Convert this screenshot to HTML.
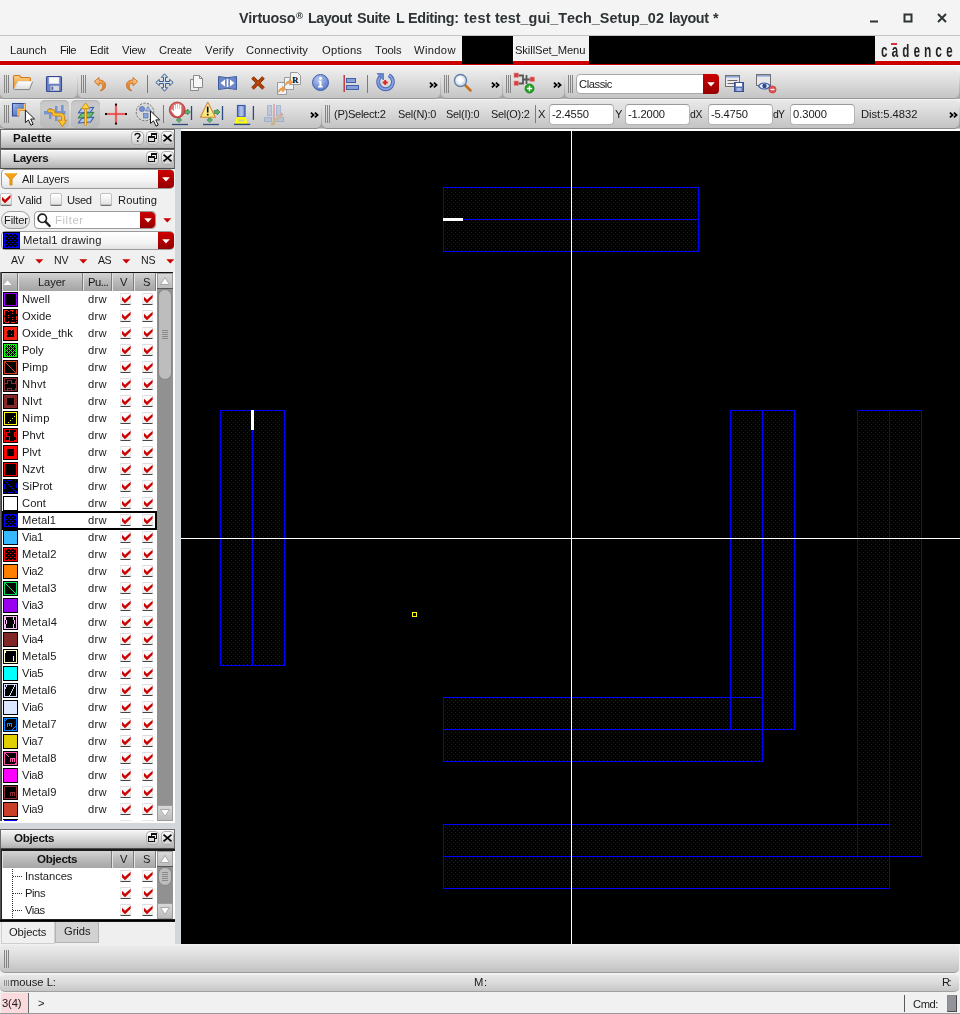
<!DOCTYPE html><html><head><meta charset="utf-8"><title>Virtuoso</title><style>
*{box-sizing:border-box;margin:0;padding:0}
html,body{width:960px;height:1014px;overflow:hidden;background:#efefef;font-family:"Liberation Sans", sans-serif;}
.a{position:absolute}
.t{position:absolute;white-space:pre;line-height:1;font-family:"Liberation Sans", sans-serif;will-change:transform;font-kerning:none}
#title{left:0;top:0;width:960px;height:36px;background:#f4f4f4;border-bottom:1px solid #c4c4c2}
#menubar{left:0;top:36px;width:960px;height:29px;background:#f2f2f2}
.hdr{position:absolute;left:0;width:175px;height:20px;border:1px solid #6a6a6a;border-bottom-color:#4c4c4c;background:linear-gradient(#ffffff 0,#f2f2f2 8%,#dedede 40%,#c2c2c2 80%,#b0b0b0 100%);}
.hbtn{position:absolute;width:13px;height:14px;border-radius:4px;border:1px solid #b0b0b0;background:linear-gradient(#fdfdfd,#e6e6e6 50%,#cfcfcf);}
.combo{position:absolute;border:1px solid #9a9a9a;border-radius:4px;background:linear-gradient(#ffffff,#f4f4f4 60%,#e2e2e2);}
.redbtn{position:absolute;border-radius:0 4px 4px 0;background:linear-gradient(#cc0000,#b40000 45%,#960000);}
.cb{position:absolute;width:13px;height:13px;border:1px solid #c2c2c2;border-radius:2px;background:linear-gradient(#ffffff,#e4e4e4);box-shadow:0 1px 0 #707070}
.th{position:absolute;top:0;height:18px;background:linear-gradient(#d4d4d4,#b8b8b8 50%,#a4a4a4);border-right:1px solid #7d7d7d;border-left:1px solid #e4e4e4}
.sw{position:absolute;left:3px;width:15px;height:15px;}
.row{position:absolute;left:0;width:155px;height:17px}
.cb2{position:absolute;width:12px;height:12px;transform:translateX(-.5px);border:1px solid #dcdcdc;border-bottom:1px solid #444;border-radius:2px;background:linear-gradient(#ffffff,#ececec)}
.sbb{background:linear-gradient(#d8d8d8,#bcbcbc);border:1px solid #9a9a9a}
</style></head><body>
<div id="title" class="a"></div>
<div class="t" style="left:239px;top:10px;font-size:14.4px;line-height:16px;color:#2e3436;font-weight:bold;letter-spacing:-0.272px;">Virtuoso</div>
<div class="t" style="left:308.3px;top:10px;font-size:14.4px;line-height:16px;color:#2e3436;font-weight:bold;letter-spacing:-0.58px;">Layout</div>
<div class="t" style="left:357px;top:10px;font-size:14.4px;line-height:16px;color:#2e3436;font-weight:bold;letter-spacing:-0.426px;">Suite</div>
<div class="t" style="left:396.4px;top:10px;font-size:14.4px;line-height:16px;color:#2e3436;font-weight:bold;">L</div>
<div class="t" style="left:408px;top:10px;font-size:14.4px;line-height:16px;color:#2e3436;font-weight:bold;letter-spacing:-0.369px;">Editing:</div>
<div class="t" style="left:463.5px;top:10px;font-size:14.4px;line-height:16px;color:#2e3436;font-weight:bold;letter-spacing:0.297px;">test</div>
<div class="t" style="left:495px;top:10px;font-size:14.4px;line-height:16px;color:#2e3436;font-weight:bold;letter-spacing:0.006px;">test_gui_Tech_Setup_02</div>
<div class="t" style="left:669px;top:10px;font-size:14.4px;line-height:16px;color:#2e3436;font-weight:bold;letter-spacing:-0.481px;">layout</div>
<div class="t" style="left:712.5px;top:10px;font-size:14.4px;line-height:16px;color:#2e3436;font-weight:bold;">*</div>
<div class="t" style="left:296.3px;top:10px;font-size:9.5px;line-height:11px;color:#2e3436;font-weight:bold;">®</div>
<svg class="a" style="left:860px;top:8px" width="96" height="22" viewBox="0 0 96 22"><g stroke="#2e3436" stroke-width="2" fill="none"><path d="M10 13.5h8"/><rect x="44.5" y="6.5" width="7" height="7"/><path d="M78 6l8 8M86 6l-8 8"/></g></svg>
<div id="menubar" class="a"></div>
<div class="a" style="left:0;top:60px;width:960px;height:1px;background:#f2fcfc"></div>
<div class="a" style="left:0;top:61px;width:960px;height:4px;background:#cc0000"></div>
<div class="a" style="left:462px;top:36px;width:51px;height:28px;background:#000"></div>
<div class="a" style="left:589px;top:36px;width:286px;height:28px;background:#000"></div>
<div class="a" style="left:513px;top:37px;width:1px;height:24px;background:#fff"></div>
<div class="t" style="left:10px;top:44px;font-size:11.2px;line-height:12px;color:#1a1a1a;letter-spacing:-0.049px;">Launch</div>
<div class="t" style="left:59.5px;top:44px;font-size:11.2px;line-height:12px;color:#1a1a1a;letter-spacing:-0.516px;">File</div>
<div class="t" style="left:89.5px;top:44px;font-size:11.2px;line-height:12px;color:#1a1a1a;letter-spacing:-0.1px;">Edit</div>
<div class="t" style="left:121.5px;top:44px;font-size:11.2px;line-height:12px;color:#1a1a1a;letter-spacing:-0.259px;">View</div>
<div class="t" style="left:158.5px;top:44px;font-size:11.2px;line-height:12px;color:#1a1a1a;letter-spacing:-0.123px;">Create</div>
<div class="t" style="left:204.5px;top:44px;font-size:11.2px;line-height:12px;color:#1a1a1a;letter-spacing:0.074px;">Verify</div>
<div class="t" style="left:246.3px;top:44px;font-size:11.2px;line-height:12px;color:#1a1a1a;letter-spacing:0.091px;">Connectivity</div>
<div class="t" style="left:321.5px;top:44px;font-size:11.2px;line-height:12px;color:#1a1a1a;letter-spacing:0.234px;">Options</div>
<div class="t" style="left:374.5px;top:44px;font-size:11.2px;line-height:12px;color:#1a1a1a;letter-spacing:-0.222px;">Tools</div>
<div class="t" style="left:414px;top:44px;font-size:11.2px;line-height:12px;color:#1a1a1a;letter-spacing:0.333px;">Window</div>
<div class="t" style="left:515px;top:44px;font-size:11.2px;line-height:12px;color:#1a1a1a;letter-spacing:-0.091px;">SkillSet_Menu</div>
<div class="a" style="left:880.5px;top:38.7px;height:24px;line-height:24px;white-space:pre;font-weight:bold;font-size:18.8px;letter-spacing:6.7px;color:#222;transform-origin:0 0;transform:scaleX(.62);will-change:transform;font-kerning:none">cadence</div>
<div class="a" style="left:891.3px;top:43px;width:5.7px;height:1.6px;background:#e03040;will-change:transform"></div>
<div class="a" style="left:0;top:65px;width:960px;height:5px;background:linear-gradient(#f2ffff 0,#f2ffff 1px,#f0f0f0 1px)"></div>
<div class="a" style="left:0;top:70px;width:960px;height:30px;background:linear-gradient(#f0f0f0 0,#e4e4e4 15%,#c4c4c4 50%,#a4a4a4 90%,#b0b0b0 96%,#f4f4f4 100%)"></div>
<div class="a" style="left:0px;top:70px;width:77px;height:29px;background:linear-gradient(#ebebeb,#e3e3e3 25%,#d3d3d3 65%,#c5c5c5);border-bottom:1px solid #989898;border-radius:4px 4px 5px 5px"></div>
<div class="a" style="left:78px;top:70px;width:362px;height:29px;background:linear-gradient(#ebebeb,#e3e3e3 25%,#d3d3d3 65%,#c5c5c5);border-bottom:1px solid #989898;border-radius:4px 4px 5px 5px"></div>
<div class="a" style="left:441px;top:70px;width:61px;height:29px;background:linear-gradient(#ebebeb,#e3e3e3 25%,#d3d3d3 65%,#c5c5c5);border-bottom:1px solid #989898;border-radius:4px 4px 5px 5px"></div>
<div class="a" style="left:503px;top:70px;width:61px;height:29px;background:linear-gradient(#ebebeb,#e3e3e3 25%,#d3d3d3 65%,#c5c5c5);border-bottom:1px solid #989898;border-radius:4px 4px 5px 5px"></div>
<div class="a" style="left:565px;top:70px;width:394px;height:29px;background:linear-gradient(#ebebeb,#e3e3e3 25%,#d3d3d3 65%,#c5c5c5);border-bottom:1px solid #989898;border-radius:4px 4px 5px 5px"></div>
<div class="a" style="left:0;top:99px;width:960px;height:1px;background:#f4f4f4"></div>
<div class="a" style="left:0;top:100px;width:960px;height:29px;background:linear-gradient(#f0f0f0 0,#e2e2e2 15%,#c0c0c0 50%,#a0a0a0 90%,#a8a8a8 96%,#dcdcdc 100%)"></div>
<div class="a" style="left:0px;top:100px;width:321px;height:29px;background:linear-gradient(#e8e8e8,#dfdfdf 30%,#cfcfcf 70%,#c3c3c3);border-bottom:1px solid #8c8c8c;border-radius:4px 4px 5px 5px"></div>
<div class="a" style="left:322px;top:100px;width:637px;height:29px;background:linear-gradient(#e8e8e8,#dfdfdf 30%,#cfcfcf 70%,#c3c3c3);border-bottom:1px solid #8c8c8c;border-radius:4px 4px 5px 5px"></div>
<div class="a" style="left:4px;top:75px;width:1px;height:18px;background:#858585"></div>
<div class="a" style="left:6px;top:75px;width:1px;height:18px;background:#858585"></div>
<div class="a" style="left:8px;top:75px;width:1px;height:18px;background:#858585"></div>
<div class="a" style="left:81px;top:75px;width:1px;height:18px;background:#858585"></div>
<div class="a" style="left:83px;top:75px;width:1px;height:18px;background:#858585"></div>
<div class="a" style="left:85px;top:75px;width:1px;height:18px;background:#858585"></div>
<div class="a" style="left:444px;top:75px;width:1px;height:18px;background:#858585"></div>
<div class="a" style="left:446px;top:75px;width:1px;height:18px;background:#858585"></div>
<div class="a" style="left:448px;top:75px;width:1px;height:18px;background:#858585"></div>
<div class="a" style="left:506px;top:75px;width:1px;height:18px;background:#858585"></div>
<div class="a" style="left:508px;top:75px;width:1px;height:18px;background:#858585"></div>
<div class="a" style="left:510px;top:75px;width:1px;height:18px;background:#858585"></div>
<div class="a" style="left:568px;top:75px;width:1px;height:18px;background:#858585"></div>
<div class="a" style="left:570px;top:75px;width:1px;height:18px;background:#858585"></div>
<div class="a" style="left:572px;top:75px;width:1px;height:18px;background:#858585"></div>
<div class="a" style="left:4px;top:105px;width:1px;height:18px;background:#858585"></div>
<div class="a" style="left:6px;top:105px;width:1px;height:18px;background:#858585"></div>
<div class="a" style="left:8px;top:105px;width:1px;height:18px;background:#858585"></div>
<div class="a" style="left:325px;top:105px;width:1px;height:18px;background:#858585"></div>
<div class="a" style="left:327px;top:105px;width:1px;height:18px;background:#858585"></div>
<div class="a" style="left:329px;top:105px;width:1px;height:18px;background:#858585"></div>
<div class="a" style="left:147px;top:75px;width:1px;height:18px;background:#7a7a7a"></div>
<div class="a" style="left:367px;top:75px;width:1px;height:18px;background:#7a7a7a"></div>
<div class="a" style="left:163px;top:105px;width:1px;height:18px;background:#7a7a7a"></div>
<div class="a" style="left:535px;top:105px;width:1px;height:18px;background:#7a7a7a"></div>
<svg class="a" style="left:429px;top:82.0px" width="9" height="6"><path d="M0.9 0.6L3.600 3L.9 5.400M4.900 .6L7.600 3L4.900 5.400" stroke="#000" stroke-width="1.700" fill="none"/></svg>
<svg class="a" style="left:491px;top:82.0px" width="9" height="6"><path d="M0.9 0.6L3.600 3L.9 5.400M4.900 .6L7.600 3L4.900 5.400" stroke="#000" stroke-width="1.700" fill="none"/></svg>
<svg class="a" style="left:553px;top:82.0px" width="9" height="6"><path d="M0.9 0.6L3.600 3L.9 5.400M4.900 .6L7.600 3L4.900 5.400" stroke="#000" stroke-width="1.700" fill="none"/></svg>
<svg class="a" style="left:310px;top:112.0px" width="9" height="6"><path d="M0.9 0.6L3.600 3L.9 5.400M4.900 .6L7.600 3L4.900 5.400" stroke="#000" stroke-width="1.700" fill="none"/></svg>
<svg class="a" style="left:949px;top:112.0px" width="9" height="6"><path d="M0.9 0.6L3.600 3L.9 5.400M4.900 .6L7.600 3L4.900 5.400" stroke="#000" stroke-width="1.700" fill="none"/></svg>
<svg class="a" style="left:12px;top:74px" width="22" height="18" viewBox="0 0 22 18" ><defs><linearGradient id="gfo" x1="0" y1="0" x2="0" y2="1"><stop offset="0" stop-color="#fbd494"/><stop offset=".5" stop-color="#f4ac4c"/><stop offset="1" stop-color="#ec9830"/></linearGradient><linearGradient id="gfl" x1="0" y1="0" x2="0" y2="1"><stop offset="0" stop-color="#ffffff"/><stop offset="1" stop-color="#dcdcdc"/></linearGradient></defs><path d="M1.500 15.500V2.800c0-.8.500-1.300 1.300-1.300h4.200c.6 0 1 .3 1.300.8l.6 1.200h8.200c.8 0 1.300.5 1.300 1.300v3" fill="url(#gfo)" stroke="#d07818" stroke-width="1.100"/><path d="M2.200 15.600L5.800 7.500H20.700L17.400 15.600z" fill="url(#gfl)" stroke="#7a7a7a" stroke-width=".9" stroke-linejoin="round"/><path d="M2.200 15.600L5.800 7.500H20.700" fill="none" stroke="#f4f4f4" stroke-width=".9"/></svg>
<svg class="a" style="left:45px;top:75px" width="18" height="18" viewBox="0 0 18 18" ><rect x="1.500" y="1.500" width="15" height="15" rx="1" fill="#6c82c4" stroke="#364a8c" stroke-width="1.100"/><rect x="3" y="2.200" width="12" height="6.500" fill="#fafafa"/><path d="M3.600 2.200v6.500M14.400 2.200v6.500" stroke="#6c82c4" stroke-width=".9"/><rect x="5.500" y="10.800" width="8.500" height="4.800" fill="#d8d8de"/><rect x="6.500" y="11.600" width="1.700" height="3.300" fill="#4c64b0"/></svg>
<svg class="a" style="left:93px;top:76px" width="15" height="16" viewBox="0 0 15 16" ><defs><linearGradient id="gun" x1="0" y1="0" x2="1" y2="1"><stop offset="0" stop-color="#fcdcb0"/><stop offset=".45" stop-color="#f0a050"/><stop offset="1" stop-color="#d87820"/></linearGradient></defs><path d="M1.200 5.600L6 1.400V4C11 4 13.200 7.200 12.400 10.600C11.800 13 9.800 14.500 7 14.900C9.200 13.400 10 11.700 9.700 9.800C9.400 8 8 7.300 6 7.300V9.900z" fill="url(#gun)" stroke="#c87024" stroke-width=".9" stroke-linejoin="round"/></svg>
<svg class="a" style="left:124px;top:76px" width="15" height="16" viewBox="0 0 15 16" ><g transform="translate(15,0) scale(-1,1)"><defs><linearGradient id="gre" x1="0" y1="0" x2="1" y2="1"><stop offset="0" stop-color="#fcdcb0"/><stop offset=".45" stop-color="#f0a050"/><stop offset="1" stop-color="#d87820"/></linearGradient></defs><path d="M1.200 5.600L6 1.400V4C11 4 13.200 7.200 12.400 10.600C11.800 13 9.800 14.500 7 14.900C9.200 13.400 10 11.700 9.700 9.800C9.400 8 8 7.300 6 7.300V9.900z" fill="url(#gre)" stroke="#c87024" stroke-width=".9" stroke-linejoin="round"/></g></svg>
<svg class="a" style="left:155px;top:73px" width="19" height="19" viewBox="0 0 19 19" ><path d="M9.5 .8L12.600 4.300H10.500V8.500H14.700V6.400L18.200 9.500L14.700 12.600V10.500H10.500V14.700H12.600L9.500 18.200L6.400 14.700H8.500V10.500H4.300V12.600L.8 9.500L4.300 6.400V8.500H8.500V4.300H6.400z" fill="#d4e0ee" stroke="#3a5e86" stroke-width="1" stroke-linejoin="round"/></svg>
<svg class="a" style="left:189px;top:74px" width="15" height="18" viewBox="0 0 15 18" ><path d="M1.5 5.5h8v11h-8z" fill="#eee" stroke="#8a8a8a"/><path d="M4.5 1.5h6l3 3v9h-9z" fill="#f6f6f6" stroke="#8a8a8a"/><path d="M10.5 1.5v3h3" fill="none" stroke="#8a8a8a"/></svg>
<svg class="a" style="left:217px;top:75px" width="21" height="16" viewBox="0 0 21 16" ><path d="M1.5 1.5Q10.5 4 19.5 1.5V14.5Q10.5 12 1.5 14.5z" fill="#6a88c8" stroke="#3c5a9c"/><path d="M3.5 8L8 4.5V11.5zM17.5 8L13 4.500V11.5z" fill="#fff"/><rect x="9.700" y="4" width="1.600" height="8" fill="#fff"/></svg>
<svg class="a" style="left:250px;top:75px" width="16" height="16" viewBox="0 0 16 16" ><path d="M2.500 2.500L13.500 13.500M13.500 2.500L2.500 13.500" stroke="#8a2c00" stroke-width="3.600"/><path d="M2.500 2.500L13.500 13.500M13.500 2.500L2.500 13.500" stroke="#c85010" stroke-width="2" stroke-dasharray="1.2 .8"/></svg>
<svg class="a" style="left:276px;top:71px" width="27" height="26" viewBox="0 0 27 26" ><g fill="#f2f2f2" stroke="#9a9a9a"><path d="M1.500 11.500h7l2 2v10h-9z"/><path d="M8.500 6.500h7l2 2v10h-9z"/><path d="M14.500 1.500h7l3 3v9h-10z"/></g><path d="M2.500 21.500c0-3 1.500-4.500 4-4.500v-2l3 3-3 3v-2c-1.500 0-2.500.8-4 2.500z" fill="#f0a050" stroke="#d08030" stroke-width=".5"/><path d="M9.500 14.500c0-3 1.500-4.500 4-4.500v-2l3 3-3 3v-2c-1.500 0-2.500.8-4 2.500z" fill="#f0a050" stroke="#d08030" stroke-width=".5"/><text x="16.200" y="11.500" font-family="Liberation Serif" font-weight="bold" font-size="8.500" fill="#000">R</text></svg>
<svg class="a" style="left:311px;top:73px" width="19" height="19" viewBox="0 0 19 19" ><defs><radialGradient id="gi" cx=".4" cy=".3" r=".8"><stop offset="0" stop-color="#b8c8f0"/><stop offset="1" stop-color="#5070c0"/></radialGradient></defs><circle cx="9.500" cy="9.500" r="8" fill="url(#gi)" stroke="#4060b0"/><circle cx="9.500" cy="5.200" r="1.500" fill="#fff"/><path d="M7.500 7.800h3v5.200h1.200v1.500h-4.600v-1.500h1.300v-3.700h-.9z" fill="#fff"/></svg>
<svg class="a" style="left:342px;top:74px" width="18" height="19" viewBox="0 0 18 19" ><rect x="1.500" y="1" width="1.400" height="17" fill="#c03030"/><rect x="4.500" y="4.500" width="9" height="4" fill="#88a0d8" stroke="#4060a8"/><rect x="4.500" y="11.500" width="12" height="4" fill="#88a0d8" stroke="#4060a8"/></svg>
<svg class="a" style="left:375px;top:72px" width="21" height="21" viewBox="0 0 21 21" ><path d="M13.800 3.200A7.400 7.400 0 1 1 5.600 4.400" fill="none" stroke="#4464b4" stroke-width="3.800"/><path d="M13.800 3.200A7.400 7.400 0 1 1 5.600 4.400" fill="none" stroke="#86a0e0" stroke-width="2"/><path d="M2 1.500h6.500v6.500z" fill="#6a88d0" stroke="#4060a8" stroke-width=".6"/><path d="M10.200 8v5M7.700 10.500h5" stroke="#e02020" stroke-width="1.800"/></svg>
<svg class="a" style="left:453px;top:73px" width="20" height="20" viewBox="0 0 20 20" ><defs><radialGradient id="gm" cx=".4" cy=".35" r=".7"><stop offset="0" stop-color="#fff"/><stop offset="1" stop-color="#c4d4e8"/></radialGradient></defs><path d="M11.500 11.500L17.500 17.500" stroke="#c87020" stroke-width="2.600" stroke-linecap="round"/><circle cx="7.500" cy="7.500" r="6" fill="url(#gm)" stroke="#6080a8" stroke-width="1.400"/><path d="M7.500 4v7M4 7.500h7" stroke="#fff" stroke-width="2"/></svg>
<svg class="a" style="left:513px;top:72px" width="24" height="23" viewBox="0 0 24 23" ><path d="M5 3.500h5v8h-5M10 7.500h7M13.500 3v9" fill="none" stroke="#585858" stroke-width="1.800"/><rect x="1" y="1" width="4.500" height="4.500" fill="#d84040" stroke="#e89090" stroke-width=".6"/><rect x="1" y="9" width="4.500" height="4.500" fill="#d84040" stroke="#e89090" stroke-width=".6"/><rect x="17" y="5" width="4.500" height="4.500" fill="#d84040" stroke="#e89090" stroke-width=".6"/><circle cx="16.500" cy="16.500" r="4.500" fill="#20a020" stroke="#108010" stroke-width=".8"/><path d="M16.500 13.800v5.400M13.800 16.500h5.400" stroke="#fff" stroke-width="1.500"/></svg>
<div class="combo" style="left:576px;top:74px;width:143px;height:20px;background:#fff;border-color:#a8a8a8"></div>
<div class="redbtn" style="left:703px;top:74px;width:16px;height:20px"></div>
<svg class="a" style="left:707px;top:82px" width="8" height="5"><path d="M0.2 0.3h7.600L4 4.400z" fill="#fff"/></svg>
<div class="t" style="left:578.5px;top:78px;font-size:11.2px;line-height:12px;color:#1a1a1a;letter-spacing:-0.432px;">Classic</div>
<svg class="a" style="left:724px;top:74px" width="22" height="20" viewBox="0 0 22 20" ><rect x="1.500" y="1.500" width="14" height="11" fill="#ececec" stroke="#707070"/><rect x="2" y="2" width="13" height="1.600" fill="#8aa8d8"/><path d="M3.500 6.500h10M3.500 9.500h8" stroke="#6a6a6a"/><rect x="10.500" y="8.500" width="9" height="9" fill="#5a74b8" stroke="#3c5090"/><rect x="12" y="9" width="6" height="3.500" fill="#fff"/><rect x="12.500" y="14" width="5" height="3" fill="#a8b8e0"/></svg>
<svg class="a" style="left:755px;top:73px" width="22" height="21" viewBox="0 0 22 21" ><rect x="1.500" y="1.500" width="14" height="11" fill="#e8e8e8" stroke="#707070"/><rect x="2" y="2" width="13" height="1.600" fill="#8aa8d8"/><path d="M3.500 13C6 9 12 9 15.500 13C12 17 6 17 3.500 13z" fill="#e8eef8" stroke="#4060a8" stroke-width="1.200"/><circle cx="9.500" cy="13" r="2.200" fill="#304890"/><circle cx="17.500" cy="16.500" r="3.600" fill="#e05050" stroke="#c03030" stroke-width=".6"/><path d="M15.500 16.500h4" stroke="#fff" stroke-width="1.300"/></svg>
<div class="a" style="left:40px;top:100px;width:29px;height:28px;border-radius:5px;background:linear-gradient(#c6c6c6,#cbcbcb 30%,#c4c4c4 60%,#bababa);box-shadow:inset 0 1px 1px #b4b4b4"></div>
<div class="a" style="left:71px;top:100px;width:29px;height:28px;border-radius:5px;background:linear-gradient(#c6c6c6,#cbcbcb 30%,#c4c4c4 60%,#bababa);box-shadow:inset 0 1px 1px #b4b4b4"></div>
<svg class="a" style="left:11px;top:102px" width="26" height="26" viewBox="0 0 26 26" ><defs><linearGradient id="gsel" x1="0" y1="0" x2="1" y2="1"><stop offset="0" stop-color="#a8bcec"/><stop offset=".6" stop-color="#5c7cc4"/><stop offset="1" stop-color="#4a6ab4"/></linearGradient></defs><path d="M1.500 1.500h12.500v6.500h-6.500v6h-6z" fill="url(#gsel)" stroke="#2c4a94" stroke-width="1.100"/><path d="M13.700 1.500v6.200h-6.500v6.300" fill="none" stroke="#e8941c" stroke-width="2.400"/><path d="M13.500 1.800v5.700h-6.500v6" fill="none" stroke="#ffd890" stroke-width=".8"/><g transform="translate(14.400,8.100)"><path d="M0 0V12.500L3 9.800L5.500 15.200L7.700 14.100L5.300 8.900H9.200z" fill="#fff" stroke="#1a1a1a" stroke-width="1" stroke-linejoin="round"/></g></svg>
<svg class="a" style="left:43px;top:103px" width="24" height="24" viewBox="0 0 24 24" ><g fill="#7090d4" opacity=".92"><rect x="1" y="8" width="21.500" height="3.400"/><rect x="6" y="5" width="2.500" height="11"/><rect x="12" y="3" width="2.500" height="15"/><rect x="18" y="2" width="2.600" height="13"/></g><path d="M6 7.700h2c2 0 2.500 1 2.500 2s.6 1.900 2.500 1.900h3.800c2.400 0 3.400 1.200 3.400 3.200V18" fill="none" stroke="#cc8414" stroke-width="3.800" stroke-linecap="round"/><path d="M15 17.200h8.600l-4.200 6.500z" fill="#f8c434" stroke="#cc8414" stroke-width="1" stroke-linejoin="round"/><path d="M6 7.700h2c2 0 2.500 1 2.500 2s.6 1.900 2.500 1.900h3.800c2.400 0 3.400 1.200 3.400 3.200V18.500" fill="none" stroke="#f8c434" stroke-width="2" stroke-linecap="round"/></svg>
<svg class="a" style="left:76px;top:102px" width="20" height="25" viewBox="0 0 20 25" ><path d="M5.500 16.5L17.800 15.2L14.500 20L2.300 21z" fill="#b4c6ee" stroke="#3c5cac" stroke-width="1.100" stroke-linejoin="round"/><path d="M5.500 11.5L17.800 10.2L14.500 15L2.300 16z" fill="#6cc080" stroke="#2e8848" stroke-width="1.100" stroke-linejoin="round"/><path d="M5.500 6.5L17.800 5.2L14.500 10L2.300 11z" fill="#b4c6ee" stroke="#3c5cac" stroke-width="1.100" stroke-linejoin="round"/><path d="M9.650 6v17.500" stroke="#c88c10" stroke-width="2.700"/><path d="M9.650 6v17.200" stroke="#fcd43c" stroke-width="1.200"/><path d="M5.200 6.700L9.600 .9L14 6.700z" fill="#fcd43c" stroke="#c88c10" stroke-width=".9" stroke-linejoin="round"/></svg>
<svg class="a" style="left:104px;top:103px" width="24" height="23" viewBox="0 0 24 23" ><path d="M1 11h22M12 .5v21" stroke="#f8a0a0" stroke-width="3" opacity=".35"/><path d="M1.500 11h21M12 1v20" stroke="#f03838" stroke-width="1.450"/><g fill="#111"><rect x="1" y="10" width="2" height="2"/><rect x="21" y="10" width="2" height="2"/><rect x="11" y=".6" width="2" height="2"/><rect x="11" y="19.600" width="2" height="2"/></g></svg>
<svg class="a" style="left:135px;top:102px" width="26" height="25" viewBox="0 0 26 25" ><circle cx="10" cy="10" r="8.800" fill="#d8d8d8" stroke="#707070" stroke-dasharray="2.200 1.400"/><circle cx="7" cy="7" r="2.600" fill="#7890d0" stroke="#4868b0" stroke-width=".6"/><path d="M13 4.500l2.600 4.500h-5.200z" fill="#a8bce4" stroke="#4868b0" stroke-width=".6"/><rect x="8.500" y="11.500" width="4.500" height="4.500" fill="#8aa4dc" stroke="#4868b0" stroke-width=".6"/><g transform="translate(15.500,9)"><path d="M0 0V12.500L3 9.800L5.500 15.200L7.700 14.100L5.300 8.900H9.200z" fill="#fff" stroke="#1a1a1a" stroke-width="1" stroke-linejoin="round"/></g></svg>
<svg class="a" style="left:168px;top:101px" width="26" height="26" viewBox="0 0 26 26" ><defs><radialGradient id="gs" cx=".45" cy=".4" r=".7"><stop offset="0" stop-color="#ec9494"/><stop offset=".7" stop-color="#d05454"/><stop offset="1" stop-color="#c44040"/></radialGradient></defs><path d="M16.5 9.6h3v-1.500l2.800 2.900-2.800 2.900v-1.500h-3z" fill="#5cb46c" stroke="#2a7a3c" stroke-width=".7"/><path d="M9.7 16.8v2h-1.600l2.900 2.800 2.900-2.800h-1.600v-2z" fill="#5cb46c" stroke="#2a7a3c" stroke-width=".5"/><path d="M23.5 5V19" stroke="#2c4a80" stroke-width="1.300"/><path d="M3.9 23.5H20" stroke="#2c4a80" stroke-width="1.300"/><circle cx="9.200" cy="8.900" r="7.900" fill="url(#gs)" stroke="#b83030" stroke-width=".8"/><path d="M5.900 4.600c0-1 1.500-1 1.500 0v3.600h.5V3.400c0-1 1.500-1 1.500 0v4.700h.5V3.300c0-1 1.500-1 1.500 0v5h.5V4.600c0-1 1.400-1 1.400 0v6.400c0 2.600-1.500 4.200-4 4.200c-1.800 0-2.900-.8-3.800-2.400L3.300 9.700c-.5-1 .7-1.700 1.300-.9l1.300 1.600z" fill="#fff"/></svg>
<svg class="a" style="left:199px;top:101px" width="26" height="26" viewBox="0 0 26 26" ><defs><linearGradient id="gw" x1="0" y1="0" x2="0" y2="1"><stop offset="0" stop-color="#fffdd4"/><stop offset="1" stop-color="#f4e46c"/></linearGradient></defs><path d="M15.2 9.6h3v-1.500l2.800 2.900-2.800 2.900v-1.500h-3z" fill="#5cb46c" stroke="#2a7a3c" stroke-width=".7"/><path d="M9.399999999999999 16.8v2h-1.600l2.900 2.800 2.900-2.800h-1.600v-2z" fill="#5cb46c" stroke="#2a7a3c" stroke-width=".5"/><path d="M23.5 5V19" stroke="#2c4a80" stroke-width="1.300"/><path d="M4 23.5H20" stroke="#2c4a80" stroke-width="1.300"/><path d="M8.800 1.200L16.400 16.200H1.400z" fill="url(#gw)" stroke="#d88838" stroke-width="1.100" stroke-linejoin="round"/><path d="M8.700 5.600v6" stroke="#000" stroke-width="1.600"/><rect x="7.900" y="12.800" width="1.600" height="1.600" fill="#000"/></svg>
<svg class="a" style="left:232px;top:102px" width="24" height="24" viewBox="0 0 24 24" ><defs><linearGradient id="gbr" x1="0" y1="0" x2="1" y2="0"><stop offset="0" stop-color="#6c88cc"/><stop offset=".5" stop-color="#b8c8ec"/><stop offset="1" stop-color="#6c88cc"/></linearGradient></defs><rect x="5.500" y="3.500" width="7.500" height="11.500" fill="url(#gbr)" stroke="#3858a4" stroke-width="1.200"/><path d="M4.500 15h9.500v2h.5v2.500h.7v2.200h-12.500v-2.200h1.300v-2.500h.5z" fill="#ffff00"/><rect x="6.300" y="17.700" width="5.700" height="1.800" fill="#c8c8d0" stroke="#e4e428" stroke-width=".5"/><path d="M2 22.400h16.200" stroke="#2c4a80" stroke-width="1.400"/><path d="M21.400 4v13.800" stroke="#2c4a80" stroke-width="1.300"/></svg>
<svg class="a" style="left:263px;top:104px" width="24" height="23" viewBox="0 0 24 23" ><g opacity=".55"><rect x="4.500" y="1.500" width="4" height="10" fill="#a8b8d8" stroke="#8098c8"/><rect x="13.500" y="1.500" width="4" height="10" fill="#a8b8d8" stroke="#8098c8"/><rect x="1.500" y="13.500" width="7" height="4" fill="#a8b8d8" stroke="#8098c8"/><rect x="13.500" y="13.500" width="7" height="4" fill="#a8b8d8" stroke="#8098c8"/><path d="M11 0v21" stroke="#d06060" stroke-width="1.300"/><path d="M19.500 9.500L8 21" stroke="#c8a860" stroke-width="2.600"/><path d="M19.500 9.500l-2 2" stroke="#d08080" stroke-width="2.600"/></g></svg>
<div class="t" style="left:334px;top:108px;font-size:11.2px;line-height:12px;color:#1a1a1a;letter-spacing:-0.34px;">(P)Select:2</div>
<div class="t" style="left:397.5px;top:108px;font-size:10.9px;line-height:12px;color:#1a1a1a;letter-spacing:-0.239px;">Sel(N):0</div>
<div class="t" style="left:446px;top:108px;font-size:10.9px;line-height:12px;color:#1a1a1a;letter-spacing:-0.233px;">Sel(I):0</div>
<div class="t" style="left:490.5px;top:108px;font-size:10.9px;line-height:12px;color:#1a1a1a;letter-spacing:-0.255px;">Sel(O):2</div>
<div class="t" style="left:538px;top:108px;font-size:11.2px;line-height:12px;color:#1a1a1a;">X</div>
<div class="a" style="left:549px;top:104px;width:65px;height:21px;background:#fff;border:1px solid #b4b4b4;border-top-color:#9a9a9a;border-radius:4px"></div>
<div class="t" style="left:552px;top:108px;font-size:11.2px;line-height:12px;color:#1a1a1a;letter-spacing:-0.164px;">-2.4550</div>
<div class="t" style="left:614.5px;top:108px;font-size:11.2px;line-height:12px;color:#1a1a1a;">Y</div>
<div class="a" style="left:625px;top:104px;width:65px;height:21px;background:#fff;border:1px solid #b4b4b4;border-top-color:#9a9a9a;border-radius:4px"></div>
<div class="t" style="left:628px;top:108px;font-size:11.2px;line-height:12px;color:#1a1a1a;letter-spacing:-0.164px;">-1.2000</div>
<div class="t" style="left:690.3px;top:109px;font-size:10.4px;line-height:11px;color:#1a1a1a;letter-spacing:-0.321px;">dX</div>
<div class="a" style="left:708px;top:104px;width:65px;height:21px;background:#fff;border:1px solid #b4b4b4;border-top-color:#9a9a9a;border-radius:4px"></div>
<div class="t" style="left:711px;top:108px;font-size:11.2px;line-height:12px;color:#1a1a1a;letter-spacing:-0.164px;">-5.4750</div>
<div class="t" style="left:773.3px;top:109px;font-size:10.4px;line-height:11px;color:#1a1a1a;letter-spacing:-0.721px;">dY</div>
<div class="a" style="left:790px;top:104px;width:65px;height:21px;background:#fff;border:1px solid #b4b4b4;border-top-color:#9a9a9a;border-radius:4px"></div>
<div class="t" style="left:793px;top:108px;font-size:11.2px;line-height:12px;color:#1a1a1a;letter-spacing:-0.051px;">0.3000</div>
<div class="t" style="left:860.5px;top:108px;font-size:11.2px;line-height:12px;color:#1a1a1a;letter-spacing:-0.016px;">Dist:5.4832</div>
<div class="a" style="left:0;top:129px;width:175px;height:815px;background:#f0f0f0"></div>
<div class="a" style="left:175px;top:129px;width:6px;height:815px;background:#d3d6db"></div>
<div class="hdr" style="top:129px"></div>
<div class="t" style="left:13px;top:132px;font-size:11.6px;line-height:12px;color:#111;font-weight:bold;letter-spacing:0.118px;">Palette</div>
<div class="hdr" style="top:149px"></div>
<div class="t" style="left:13px;top:152px;font-size:11.6px;line-height:12px;color:#111;font-weight:bold;letter-spacing:-0.361px;">Layers</div>
<div class="hbtn" style="left:131px;top:131px"></div>
<svg class="a" style="left:131px;top:131px" width="13" height="13"><path d="M4 4.6c0-1.3 1-2.1 2.5-2.1s2.5.8 2.5 2c0 1.6-2.4 1.7-2.4 3.6" stroke="#111" stroke-width="1.3" fill="none"/><rect x="5.9" y="9.3" width="1.5" height="1.5" fill="#111"/></svg>
<div class="hbtn" style="left:146px;top:131px"></div>
<svg class="a" style="left:146px;top:131px" width="13" height="13" shape-rendering="crispEdges"><g fill="none" stroke="#111"><path d="M5.5 4.5v-2h5v5h-2" stroke-width="1"/><path d="M5 2.5h6" stroke-width="2"/><rect x="2.5" y="5.5" width="6" height="5"/><path d="M2 5.5h7" stroke-width="2"/></g></svg>
<div class="hbtn" style="left:161px;top:131px"></div>
<svg class="a" style="left:161px;top:131px" width="13" height="14"><path d="M2.5 3.6l8 6.8M10.5 3.6l-8 6.8" stroke="#000" stroke-width="1.7" fill="none"/></svg>
<div class="hbtn" style="left:146px;top:151px"></div>
<svg class="a" style="left:146px;top:151px" width="13" height="13" shape-rendering="crispEdges"><g fill="none" stroke="#111"><path d="M5.5 4.5v-2h5v5h-2" stroke-width="1"/><path d="M5 2.5h6" stroke-width="2"/><rect x="2.5" y="5.5" width="6" height="5"/><path d="M2 5.5h7" stroke-width="2"/></g></svg>
<div class="hbtn" style="left:161px;top:151px"></div>
<svg class="a" style="left:161px;top:151px" width="13" height="14"><path d="M2.5 3.6l8 6.8M10.5 3.6l-8 6.8" stroke="#000" stroke-width="1.7" fill="none"/></svg>
<div class="combo" style="left:1px;top:169px;width:173px;height:20px"></div>
<div class="redbtn" style="left:158px;top:170px;width:16px;height:18px"></div>
<svg class="a" style="left:162.0px;top:177.0px" width="8" height="5"><path d="M0.2 0.3h7.6L4 4.4z" fill="#fff"/></svg>
<svg class="a" style="left:4px;top:172px" width="14" height="14"><path d="M1 1.600h12l-4.900 5.300v6.100h-2.200v-6.100z" fill="#f5a010" stroke="#c87c08" stroke-width=".7" stroke-linejoin="round"/><path d="M1.800 1.700h10.400" stroke="#ffcc50" stroke-width=".9"/></svg>
<div class="t" style="left:22.3px;top:173px;font-size:11.2px;line-height:12px;color:#1a1a1a;letter-spacing:-0.186px;">All Layers</div>
<div class="cb" style="left:0px;top:193px;width:12px;height:12px"></div>
<svg class="a" style="left:0px;top:193px" width="12" height="12"><path d="M2 3.8L5 6.8L10.5 1.8V4.8L5 10.3L2 7.3z" fill="#cc0000"/></svg>
<div class="t" style="left:18px;top:194px;font-size:11.2px;line-height:12px;color:#1a1a1a;letter-spacing:-0.226px;">Valid</div>
<div class="cb" style="left:50px;top:193px;width:12px;height:12px"></div>
<div class="t" style="left:67px;top:194px;font-size:11.2px;line-height:12px;color:#1a1a1a;letter-spacing:-0.382px;">Used</div>
<div class="cb" style="left:100px;top:193px;width:12px;height:12px"></div>
<div class="t" style="left:118px;top:194px;font-size:11.2px;line-height:12px;color:#1a1a1a;letter-spacing:0.066px;">Routing</div>
<div class="a" style="left:1px;top:211px;width:29px;height:18px;border:1px solid #9c9c9c;border-radius:9px;background:linear-gradient(#fdfdfd,#dcdcdc)"></div>
<div class="t" style="left:3.5px;top:214px;font-size:11.2px;line-height:12px;color:#1a1a1a;letter-spacing:-0.178px;">Filter</div>
<div class="combo" style="left:34px;top:211px;width:122px;height:18px;background:#fff"></div>
<div class="redbtn" style="left:140px;top:212px;width:15px;height:16px"></div>
<svg class="a" style="left:143.5px;top:218.0px" width="8" height="5"><path d="M0.2 0.3h7.6L4 4.4z" fill="#fff"/></svg>
<svg class="a" style="left:36px;top:212px" width="16" height="16"><circle cx="6.3" cy="6.3" r="4.2" fill="#fff" stroke="#222" stroke-width="1.7"/><path d="M9.4 9.6l4.3 4.4" stroke="#222" stroke-width="2.4" stroke-linecap="round"/></svg>
<div class="t" style="left:54.5px;top:214px;font-size:11.2px;line-height:12px;color:#c4c4c4;letter-spacing:0.622px;">Filter</div>
<svg class="a" style="left:162.5px;top:218px" width="9" height="5"><path d="M0.3 0.2h8L4.3 4.6z" fill="#cc0000"/></svg>
<div class="combo" style="left:1px;top:231px;width:173px;height:19px"></div>
<div class="redbtn" style="left:158px;top:232px;width:16px;height:17px"></div>
<svg class="a" style="left:162.0px;top:238.5px" width="8" height="5"><path d="M0.2 0.3h7.6L4 4.4z" fill="#fff"/></svg>
<svg class="a" style="left:3px;top:232px" width="17" height="17" shape-rendering="crispEdges"><rect width="17" height="17" fill="#000"/><rect x="1.5" y="1.5" width="14" height="14" fill="url(#dots)" stroke="#0000ff"/></svg>
<div class="t" style="left:23px;top:234px;font-size:11.2px;line-height:12px;color:#1a1a1a;letter-spacing:0.196px;">Metal1 drawing</div>
<div class="t" style="left:10.5px;top:254px;font-size:10.6px;line-height:12px;color:#1a1a1a;letter-spacing:-0.64px;">AV</div>
<svg class="a" style="left:35px;top:259px" width="9" height="5"><path d="M0.3 0.2h8L4.3 4.6z" fill="#cc0000"/></svg>
<div class="t" style="left:53.5px;top:254px;font-size:10.6px;line-height:12px;color:#1a1a1a;letter-spacing:-0.225px;">NV</div>
<svg class="a" style="left:79px;top:259px" width="9" height="5"><path d="M0.3 0.2h8L4.3 4.6z" fill="#cc0000"/></svg>
<div class="t" style="left:98px;top:254px;font-size:10.6px;line-height:12px;color:#1a1a1a;letter-spacing:-0.64px;">AS</div>
<svg class="a" style="left:122px;top:259px" width="9" height="5"><path d="M0.3 0.2h8L4.3 4.6z" fill="#cc0000"/></svg>
<div class="t" style="left:141px;top:254px;font-size:10.6px;line-height:12px;color:#1a1a1a;letter-spacing:-0.225px;">NS</div>
<svg class="a" style="left:166px;top:259px" width="9" height="5"><path d="M0.3 0.2h8L4.3 4.6z" fill="#cc0000"/></svg>
<div class="a" style="left:0;top:272px;width:175px;height:550px;background:#fff"></div>
<div class="a" style="left:0;top:272px;width:175px;height:1px;background:#111"></div>
<div class="a" style="left:0;top:272px;width:2px;height:550px;background:linear-gradient(90deg,#777,#222)"></div>
<div class="a" style="left:2px;top:273px;width:154px;height:18px;overflow:hidden"><div class="th" style="left:0;width:16px"></div><div class="th" style="left:16px;width:65px"></div><div class="th" style="left:81px;width:29px"></div><div class="th" style="left:110px;width:22px"></div><div class="th" style="left:132px;width:22px"></div></div>
<svg class="a" style="left:3px;top:279px" width="10" height="7"><path d="M0.5 6L4.5 1.5L8.5 6z" fill="#fff"/></svg>
<div class="t" style="left:37.5px;top:276px;font-size:11.2px;line-height:12px;color:#1a1a1a;letter-spacing:-0.129px;">Layer</div>
<div class="t" style="left:87.5px;top:276px;font-size:11.2px;line-height:12px;color:#1a1a1a;letter-spacing:-0.509px;">Pu...</div>
<div class="t" style="left:119.5px;top:276px;font-size:11.2px;line-height:12px;color:#1a1a1a;">V</div>
<div class="t" style="left:142.5px;top:276px;font-size:11.2px;line-height:12px;color:#1a1a1a;">S</div>
<svg class="a" style="left:3px;top:292px" width="15" height="15" shape-rendering="crispEdges"><rect width="15" height="15" fill="#000"/><rect x="1" y="1" width="13" height="1" fill="#a000ff"/><rect x="1" y="2" width="1" height="1" fill="#a000ff"/><rect x="13" y="2" width="1" height="1" fill="#a000ff"/><rect x="1" y="3" width="1" height="1" fill="#a000ff"/><rect x="13" y="3" width="1" height="1" fill="#a000ff"/><rect x="1" y="4" width="1" height="1" fill="#a000ff"/><rect x="13" y="4" width="1" height="1" fill="#a000ff"/><rect x="1" y="5" width="1" height="1" fill="#a000ff"/><rect x="13" y="5" width="1" height="1" fill="#a000ff"/><rect x="1" y="6" width="1" height="1" fill="#a000ff"/><rect x="13" y="6" width="1" height="1" fill="#a000ff"/><rect x="1" y="7" width="1" height="1" fill="#a000ff"/><rect x="13" y="7" width="1" height="1" fill="#a000ff"/><rect x="1" y="8" width="1" height="1" fill="#a000ff"/><rect x="13" y="8" width="1" height="1" fill="#a000ff"/><rect x="1" y="9" width="1" height="1" fill="#a000ff"/><rect x="13" y="9" width="1" height="1" fill="#a000ff"/><rect x="1" y="10" width="1" height="1" fill="#a000ff"/><rect x="13" y="10" width="1" height="1" fill="#a000ff"/><rect x="1" y="11" width="1" height="1" fill="#a000ff"/><rect x="13" y="11" width="1" height="1" fill="#a000ff"/><rect x="1" y="12" width="1" height="1" fill="#a000ff"/><rect x="13" y="12" width="1" height="1" fill="#a000ff"/><rect x="1" y="13" width="13" height="1" fill="#a000ff"/></svg>
<div class="t" style="left:22px;top:293px;font-size:11.2px;line-height:12px;color:#1a1a1a;letter-spacing:0.154px;">Nwell</div>
<div class="t" style="left:87.5px;top:293px;font-size:11.2px;line-height:12px;color:#1a1a1a;letter-spacing:0.226px;">drw</div>
<div class="cb2" style="left:120px;top:293px"></div>
<svg class="a" style="left:120px;top:293px" width="12" height="12"><path d="M2 3.8L5 6.8L10.6 1.7V4.7L5 10.3L2 7.3z" fill="#cc0000"/></svg>
<div class="cb2" style="left:142px;top:293px"></div>
<svg class="a" style="left:142px;top:293px" width="12" height="12"><path d="M2 3.8L5 6.8L10.6 1.7V4.7L5 10.3L2 7.3z" fill="#cc0000"/></svg>
<svg class="a" style="left:3px;top:309px" width="15" height="15" shape-rendering="crispEdges"><rect width="15" height="15" fill="#000"/><rect x="1" y="1" width="4" height="1" fill="#ff2010"/><rect x="7" y="1" width="4" height="1" fill="#ff2010"/><rect x="13" y="1" width="1" height="1" fill="#ff2010"/><rect x="1" y="2" width="1" height="1" fill="#ff2010"/><rect x="5" y="2" width="1" height="1" fill="#ff2010"/><rect x="9" y="2" width="1" height="1" fill="#ff2010"/><rect x="13" y="2" width="1" height="1" fill="#ff2010"/><rect x="1" y="3" width="1" height="1" fill="#ff2010"/><rect x="13" y="3" width="1" height="1" fill="#ff2010"/><rect x="1" y="4" width="1" height="1" fill="#ff2010"/><rect x="9" y="4" width="1" height="1" fill="#ff2010"/><rect x="13" y="4" width="1" height="1" fill="#ff2010"/><rect x="1" y="5" width="1" height="1" fill="#ff2010"/><rect x="1" y="6" width="1" height="1" fill="#ff2010"/><rect x="5" y="6" width="1" height="1" fill="#ff2010"/><rect x="13" y="7" width="1" height="1" fill="#ff2010"/><rect x="1" y="8" width="1" height="1" fill="#ff2010"/><rect x="5" y="8" width="1" height="1" fill="#ff2010"/><rect x="9" y="8" width="1" height="1" fill="#ff2010"/><rect x="13" y="8" width="1" height="1" fill="#ff2010"/><rect x="1" y="9" width="1" height="1" fill="#ff2010"/><rect x="13" y="9" width="1" height="1" fill="#ff2010"/><rect x="1" y="10" width="1" height="1" fill="#ff2010"/><rect x="9" y="10" width="1" height="1" fill="#ff2010"/><rect x="13" y="10" width="1" height="1" fill="#ff2010"/><rect x="1" y="11" width="1" height="1" fill="#ff2010"/><rect x="1" y="12" width="1" height="1" fill="#ff2010"/><rect x="5" y="12" width="1" height="1" fill="#ff2010"/><rect x="13" y="12" width="1" height="1" fill="#ff2010"/><rect x="2" y="13" width="4" height="1" fill="#ff2010"/><rect x="8" y="13" width="4" height="1" fill="#ff2010"/></svg>
<div class="t" style="left:22px;top:310px;font-size:11.2px;line-height:12px;color:#1a1a1a;letter-spacing:0.061px;">Oxide</div>
<div class="t" style="left:87.5px;top:310px;font-size:11.2px;line-height:12px;color:#1a1a1a;letter-spacing:0.226px;">drw</div>
<div class="cb2" style="left:120px;top:310px"></div>
<svg class="a" style="left:120px;top:310px" width="12" height="12"><path d="M2 3.8L5 6.8L10.6 1.7V4.7L5 10.3L2 7.3z" fill="#cc0000"/></svg>
<div class="cb2" style="left:142px;top:310px"></div>
<svg class="a" style="left:142px;top:310px" width="12" height="12"><path d="M2 3.8L5 6.8L10.6 1.7V4.7L5 10.3L2 7.3z" fill="#cc0000"/></svg>
<svg class="a" style="left:3px;top:326px" width="15" height="15" shape-rendering="crispEdges"><rect width="15" height="15" fill="#000"/><rect x="1" y="1" width="13" height="1" fill="#f02010"/><rect x="1" y="2" width="13" height="1" fill="#f02010"/><rect x="1" y="3" width="13" height="1" fill="#f02010"/><rect x="1" y="4" width="4" height="1" fill="#f02010"/><rect x="8" y="4" width="1" height="1" fill="#f02010"/><rect x="11" y="4" width="3" height="1" fill="#f02010"/><rect x="1" y="5" width="3" height="1" fill="#f02010"/><rect x="11" y="5" width="3" height="1" fill="#f02010"/><rect x="1" y="6" width="3" height="1" fill="#f02010"/><rect x="11" y="6" width="3" height="1" fill="#f02010"/><rect x="1" y="7" width="3" height="1" fill="#f02010"/><rect x="11" y="7" width="3" height="1" fill="#f02010"/><rect x="1" y="8" width="4" height="1" fill="#f02010"/><rect x="8" y="8" width="1" height="1" fill="#f02010"/><rect x="11" y="8" width="3" height="1" fill="#f02010"/><rect x="1" y="9" width="3" height="1" fill="#f02010"/><rect x="11" y="9" width="3" height="1" fill="#f02010"/><rect x="1" y="10" width="3" height="1" fill="#f02010"/><rect x="11" y="10" width="3" height="1" fill="#f02010"/><rect x="1" y="11" width="13" height="1" fill="#f02010"/><rect x="1" y="12" width="13" height="1" fill="#f02010"/><rect x="1" y="13" width="13" height="1" fill="#f02010"/></svg>
<div class="t" style="left:22px;top:327px;font-size:11.2px;line-height:12px;color:#1a1a1a;letter-spacing:0.072px;">Oxide_thk</div>
<div class="t" style="left:87.5px;top:327px;font-size:11.2px;line-height:12px;color:#1a1a1a;letter-spacing:0.226px;">drw</div>
<div class="cb2" style="left:120px;top:327px"></div>
<svg class="a" style="left:120px;top:327px" width="12" height="12"><path d="M2 3.8L5 6.8L10.6 1.7V4.7L5 10.3L2 7.3z" fill="#cc0000"/></svg>
<div class="cb2" style="left:142px;top:327px"></div>
<svg class="a" style="left:142px;top:327px" width="12" height="12"><path d="M2 3.8L5 6.8L10.6 1.7V4.7L5 10.3L2 7.3z" fill="#cc0000"/></svg>
<svg class="a" style="left:3px;top:343px" width="15" height="15" shape-rendering="crispEdges"><rect width="15" height="15" fill="#000"/><rect x="1" y="1" width="13" height="1" fill="#00ff00"/><rect x="1" y="2" width="2" height="1" fill="#00ff00"/><rect x="4" y="2" width="1" height="1" fill="#00ff00"/><rect x="6" y="2" width="1" height="1" fill="#00ff00"/><rect x="8" y="2" width="1" height="1" fill="#00ff00"/><rect x="10" y="2" width="1" height="1" fill="#00ff00"/><rect x="12" y="2" width="2" height="1" fill="#00ff00"/><rect x="1" y="3" width="1" height="1" fill="#00ff00"/><rect x="3" y="3" width="1" height="1" fill="#00ff00"/><rect x="7" y="3" width="1" height="1" fill="#00ff00"/><rect x="11" y="3" width="1" height="1" fill="#00ff00"/><rect x="13" y="3" width="1" height="1" fill="#00ff00"/><rect x="1" y="4" width="2" height="1" fill="#00ff00"/><rect x="4" y="4" width="1" height="1" fill="#00ff00"/><rect x="6" y="4" width="1" height="1" fill="#00ff00"/><rect x="8" y="4" width="1" height="1" fill="#00ff00"/><rect x="10" y="4" width="1" height="1" fill="#00ff00"/><rect x="12" y="4" width="2" height="1" fill="#00ff00"/><rect x="1" y="5" width="1" height="1" fill="#00ff00"/><rect x="5" y="5" width="1" height="1" fill="#00ff00"/><rect x="9" y="5" width="1" height="1" fill="#00ff00"/><rect x="13" y="5" width="1" height="1" fill="#00ff00"/><rect x="1" y="6" width="2" height="1" fill="#00ff00"/><rect x="4" y="6" width="1" height="1" fill="#00ff00"/><rect x="6" y="6" width="1" height="1" fill="#00ff00"/><rect x="8" y="6" width="1" height="1" fill="#00ff00"/><rect x="10" y="6" width="1" height="1" fill="#00ff00"/><rect x="12" y="6" width="2" height="1" fill="#00ff00"/><rect x="1" y="7" width="1" height="1" fill="#00ff00"/><rect x="3" y="7" width="1" height="1" fill="#00ff00"/><rect x="7" y="7" width="1" height="1" fill="#00ff00"/><rect x="11" y="7" width="1" height="1" fill="#00ff00"/><rect x="13" y="7" width="1" height="1" fill="#00ff00"/><rect x="1" y="8" width="2" height="1" fill="#00ff00"/><rect x="4" y="8" width="1" height="1" fill="#00ff00"/><rect x="6" y="8" width="1" height="1" fill="#00ff00"/><rect x="8" y="8" width="1" height="1" fill="#00ff00"/><rect x="10" y="8" width="1" height="1" fill="#00ff00"/><rect x="12" y="8" width="2" height="1" fill="#00ff00"/><rect x="1" y="9" width="1" height="1" fill="#00ff00"/><rect x="5" y="9" width="1" height="1" fill="#00ff00"/><rect x="9" y="9" width="1" height="1" fill="#00ff00"/><rect x="13" y="9" width="1" height="1" fill="#00ff00"/><rect x="1" y="10" width="2" height="1" fill="#00ff00"/><rect x="4" y="10" width="1" height="1" fill="#00ff00"/><rect x="6" y="10" width="1" height="1" fill="#00ff00"/><rect x="8" y="10" width="1" height="1" fill="#00ff00"/><rect x="10" y="10" width="1" height="1" fill="#00ff00"/><rect x="12" y="10" width="2" height="1" fill="#00ff00"/><rect x="1" y="11" width="1" height="1" fill="#00ff00"/><rect x="3" y="11" width="1" height="1" fill="#00ff00"/><rect x="7" y="11" width="1" height="1" fill="#00ff00"/><rect x="11" y="11" width="1" height="1" fill="#00ff00"/><rect x="13" y="11" width="1" height="1" fill="#00ff00"/><rect x="1" y="12" width="2" height="1" fill="#00ff00"/><rect x="4" y="12" width="1" height="1" fill="#00ff00"/><rect x="6" y="12" width="1" height="1" fill="#00ff00"/><rect x="8" y="12" width="1" height="1" fill="#00ff00"/><rect x="10" y="12" width="1" height="1" fill="#00ff00"/><rect x="12" y="12" width="2" height="1" fill="#00ff00"/><rect x="1" y="13" width="13" height="1" fill="#00ff00"/></svg>
<div class="t" style="left:22px;top:344px;font-size:11.2px;line-height:12px;color:#1a1a1a;letter-spacing:-0.096px;">Poly</div>
<div class="t" style="left:87.5px;top:344px;font-size:11.2px;line-height:12px;color:#1a1a1a;letter-spacing:0.226px;">drw</div>
<div class="cb2" style="left:120px;top:344px"></div>
<svg class="a" style="left:120px;top:344px" width="12" height="12"><path d="M2 3.8L5 6.8L10.6 1.7V4.7L5 10.3L2 7.3z" fill="#cc0000"/></svg>
<div class="cb2" style="left:142px;top:344px"></div>
<svg class="a" style="left:142px;top:344px" width="12" height="12"><path d="M2 3.8L5 6.8L10.6 1.7V4.7L5 10.3L2 7.3z" fill="#cc0000"/></svg>
<svg class="a" style="left:3px;top:360px" width="15" height="15" shape-rendering="crispEdges"><rect width="15" height="15" fill="#000"/><rect x="1" y="1" width="13" height="1" fill="#d04020"/><rect x="1" y="2" width="2" height="1" fill="#d04020"/><rect x="13" y="2" width="1" height="1" fill="#d04020"/><rect x="1" y="3" width="1" height="1" fill="#d04020"/><rect x="3" y="3" width="1" height="1" fill="#d04020"/><rect x="13" y="3" width="1" height="1" fill="#d04020"/><rect x="1" y="4" width="1" height="1" fill="#d04020"/><rect x="4" y="4" width="1" height="1" fill="#d04020"/><rect x="13" y="4" width="1" height="1" fill="#d04020"/><rect x="1" y="5" width="1" height="1" fill="#d04020"/><rect x="5" y="5" width="1" height="1" fill="#d04020"/><rect x="13" y="5" width="1" height="1" fill="#d04020"/><rect x="1" y="6" width="1" height="1" fill="#d04020"/><rect x="6" y="6" width="1" height="1" fill="#d04020"/><rect x="13" y="6" width="1" height="1" fill="#d04020"/><rect x="1" y="7" width="1" height="1" fill="#d04020"/><rect x="7" y="7" width="1" height="1" fill="#d04020"/><rect x="13" y="7" width="1" height="1" fill="#d04020"/><rect x="1" y="8" width="1" height="1" fill="#d04020"/><rect x="8" y="8" width="1" height="1" fill="#d04020"/><rect x="13" y="8" width="1" height="1" fill="#d04020"/><rect x="1" y="9" width="1" height="1" fill="#d04020"/><rect x="9" y="9" width="1" height="1" fill="#d04020"/><rect x="13" y="9" width="1" height="1" fill="#d04020"/><rect x="1" y="10" width="1" height="1" fill="#d04020"/><rect x="10" y="10" width="1" height="1" fill="#d04020"/><rect x="13" y="10" width="1" height="1" fill="#d04020"/><rect x="1" y="11" width="1" height="1" fill="#d04020"/><rect x="11" y="11" width="1" height="1" fill="#d04020"/><rect x="13" y="11" width="1" height="1" fill="#d04020"/><rect x="1" y="12" width="1" height="1" fill="#d04020"/><rect x="12" y="12" width="2" height="1" fill="#d04020"/><rect x="1" y="13" width="13" height="1" fill="#d04020"/></svg>
<div class="t" style="left:22px;top:361px;font-size:11.2px;line-height:12px;color:#1a1a1a;letter-spacing:0.161px;">Pimp</div>
<div class="t" style="left:87.5px;top:361px;font-size:11.2px;line-height:12px;color:#1a1a1a;letter-spacing:0.226px;">drw</div>
<div class="cb2" style="left:120px;top:361px"></div>
<svg class="a" style="left:120px;top:361px" width="12" height="12"><path d="M2 3.8L5 6.8L10.6 1.7V4.7L5 10.3L2 7.3z" fill="#cc0000"/></svg>
<div class="cb2" style="left:142px;top:361px"></div>
<svg class="a" style="left:142px;top:361px" width="12" height="12"><path d="M2 3.8L5 6.8L10.6 1.7V4.7L5 10.3L2 7.3z" fill="#cc0000"/></svg>
<svg class="a" style="left:3px;top:377px" width="15" height="15" shape-rendering="crispEdges"><rect width="15" height="15" fill="#000"/><rect x="1" y="1" width="13" height="1" fill="#8c2c2c"/><rect x="1" y="2" width="1" height="1" fill="#8c2c2c"/><rect x="13" y="2" width="1" height="1" fill="#8c2c2c"/><rect x="1" y="3" width="1" height="1" fill="#8c2c2c"/><rect x="4" y="3" width="5" height="1" fill="#8c2c2c"/><rect x="13" y="3" width="1" height="1" fill="#8c2c2c"/><rect x="1" y="4" width="1" height="1" fill="#8c2c2c"/><rect x="4" y="4" width="1" height="1" fill="#8c2c2c"/><rect x="8" y="4" width="1" height="1" fill="#8c2c2c"/><rect x="12" y="4" width="2" height="1" fill="#8c2c2c"/><rect x="1" y="5" width="1" height="1" fill="#8c2c2c"/><rect x="4" y="5" width="1" height="1" fill="#8c2c2c"/><rect x="8" y="5" width="1" height="1" fill="#8c2c2c"/><rect x="12" y="5" width="2" height="1" fill="#8c2c2c"/><rect x="1" y="6" width="4" height="1" fill="#8c2c2c"/><rect x="8" y="6" width="6" height="1" fill="#8c2c2c"/><rect x="1" y="7" width="1" height="1" fill="#8c2c2c"/><rect x="13" y="7" width="1" height="1" fill="#8c2c2c"/><rect x="1" y="8" width="1" height="1" fill="#8c2c2c"/><rect x="13" y="8" width="1" height="1" fill="#8c2c2c"/><rect x="1" y="9" width="1" height="1" fill="#8c2c2c"/><rect x="13" y="9" width="1" height="1" fill="#8c2c2c"/><rect x="1" y="10" width="1" height="1" fill="#8c2c2c"/><rect x="13" y="10" width="1" height="1" fill="#8c2c2c"/><rect x="1" y="11" width="1" height="1" fill="#8c2c2c"/><rect x="4" y="11" width="5" height="1" fill="#8c2c2c"/><rect x="12" y="11" width="2" height="1" fill="#8c2c2c"/><rect x="1" y="12" width="1" height="1" fill="#8c2c2c"/><rect x="4" y="12" width="1" height="1" fill="#8c2c2c"/><rect x="8" y="12" width="1" height="1" fill="#8c2c2c"/><rect x="12" y="12" width="2" height="1" fill="#8c2c2c"/><rect x="1" y="13" width="13" height="1" fill="#8c2c2c"/></svg>
<div class="t" style="left:22px;top:378px;font-size:11.2px;line-height:12px;color:#1a1a1a;letter-spacing:0.324px;">Nhvt</div>
<div class="t" style="left:87.5px;top:378px;font-size:11.2px;line-height:12px;color:#1a1a1a;letter-spacing:0.226px;">drw</div>
<div class="cb2" style="left:120px;top:378px"></div>
<svg class="a" style="left:120px;top:378px" width="12" height="12"><path d="M2 3.8L5 6.8L10.6 1.7V4.7L5 10.3L2 7.3z" fill="#cc0000"/></svg>
<div class="cb2" style="left:142px;top:378px"></div>
<svg class="a" style="left:142px;top:378px" width="12" height="12"><path d="M2 3.8L5 6.8L10.6 1.7V4.7L5 10.3L2 7.3z" fill="#cc0000"/></svg>
<svg class="a" style="left:3px;top:394px" width="15" height="15" shape-rendering="crispEdges"><rect width="15" height="15" fill="#000"/><rect x="1" y="1" width="13" height="1" fill="#8a2a2a"/><rect x="1" y="2" width="1" height="1" fill="#8a2a2a"/><rect x="2" y="2" width="11" height="1" fill="#7c2626"/><rect x="13" y="2" width="1" height="1" fill="#8a2a2a"/><rect x="1" y="3" width="1" height="1" fill="#8a2a2a"/><rect x="2" y="3" width="1" height="1" fill="#7c2626"/><rect x="3" y="3" width="9" height="1" fill="#8a2a2a"/><rect x="12" y="3" width="1" height="1" fill="#7c2626"/><rect x="13" y="3" width="1" height="1" fill="#8a2a2a"/><rect x="1" y="4" width="1" height="1" fill="#8a2a2a"/><rect x="2" y="4" width="1" height="1" fill="#7c2626"/><rect x="3" y="4" width="1" height="1" fill="#8a2a2a"/><rect x="11" y="4" width="1" height="1" fill="#8a2a2a"/><rect x="12" y="4" width="1" height="1" fill="#7c2626"/><rect x="13" y="4" width="1" height="1" fill="#8a2a2a"/><rect x="1" y="5" width="1" height="1" fill="#8a2a2a"/><rect x="2" y="5" width="1" height="1" fill="#7c2626"/><rect x="3" y="5" width="1" height="1" fill="#8a2a2a"/><rect x="11" y="5" width="1" height="1" fill="#8a2a2a"/><rect x="12" y="5" width="1" height="1" fill="#7c2626"/><rect x="13" y="5" width="1" height="1" fill="#8a2a2a"/><rect x="1" y="6" width="1" height="1" fill="#8a2a2a"/><rect x="2" y="6" width="1" height="1" fill="#7c2626"/><rect x="3" y="6" width="1" height="1" fill="#8a2a2a"/><rect x="11" y="6" width="1" height="1" fill="#8a2a2a"/><rect x="12" y="6" width="1" height="1" fill="#7c2626"/><rect x="13" y="6" width="1" height="1" fill="#8a2a2a"/><rect x="1" y="7" width="1" height="1" fill="#8a2a2a"/><rect x="2" y="7" width="1" height="1" fill="#7c2626"/><rect x="3" y="7" width="1" height="1" fill="#8a2a2a"/><rect x="11" y="7" width="1" height="1" fill="#8a2a2a"/><rect x="12" y="7" width="1" height="1" fill="#7c2626"/><rect x="13" y="7" width="1" height="1" fill="#8a2a2a"/><rect x="1" y="8" width="1" height="1" fill="#8a2a2a"/><rect x="2" y="8" width="1" height="1" fill="#7c2626"/><rect x="3" y="8" width="1" height="1" fill="#8a2a2a"/><rect x="11" y="8" width="1" height="1" fill="#8a2a2a"/><rect x="12" y="8" width="1" height="1" fill="#7c2626"/><rect x="13" y="8" width="1" height="1" fill="#8a2a2a"/><rect x="1" y="9" width="1" height="1" fill="#8a2a2a"/><rect x="2" y="9" width="1" height="1" fill="#7c2626"/><rect x="3" y="9" width="1" height="1" fill="#8a2a2a"/><rect x="11" y="9" width="1" height="1" fill="#8a2a2a"/><rect x="12" y="9" width="1" height="1" fill="#7c2626"/><rect x="13" y="9" width="1" height="1" fill="#8a2a2a"/><rect x="1" y="10" width="1" height="1" fill="#8a2a2a"/><rect x="2" y="10" width="1" height="1" fill="#7c2626"/><rect x="3" y="10" width="1" height="1" fill="#8a2a2a"/><rect x="11" y="10" width="1" height="1" fill="#8a2a2a"/><rect x="12" y="10" width="1" height="1" fill="#7c2626"/><rect x="13" y="10" width="1" height="1" fill="#8a2a2a"/><rect x="1" y="11" width="1" height="1" fill="#8a2a2a"/><rect x="2" y="11" width="1" height="1" fill="#7c2626"/><rect x="3" y="11" width="9" height="1" fill="#8a2a2a"/><rect x="12" y="11" width="1" height="1" fill="#7c2626"/><rect x="13" y="11" width="1" height="1" fill="#8a2a2a"/><rect x="1" y="12" width="1" height="1" fill="#8a2a2a"/><rect x="2" y="12" width="11" height="1" fill="#7c2626"/><rect x="13" y="12" width="1" height="1" fill="#8a2a2a"/><rect x="1" y="13" width="13" height="1" fill="#8a2a2a"/></svg>
<div class="t" style="left:22px;top:395px;font-size:11.2px;line-height:12px;color:#1a1a1a;letter-spacing:0.237px;">Nlvt</div>
<div class="t" style="left:87.5px;top:395px;font-size:11.2px;line-height:12px;color:#1a1a1a;letter-spacing:0.226px;">drw</div>
<div class="cb2" style="left:120px;top:395px"></div>
<svg class="a" style="left:120px;top:395px" width="12" height="12"><path d="M2 3.8L5 6.8L10.6 1.7V4.7L5 10.3L2 7.3z" fill="#cc0000"/></svg>
<div class="cb2" style="left:142px;top:395px"></div>
<svg class="a" style="left:142px;top:395px" width="12" height="12"><path d="M2 3.8L5 6.8L10.6 1.7V4.7L5 10.3L2 7.3z" fill="#cc0000"/></svg>
<svg class="a" style="left:3px;top:411px" width="15" height="15" shape-rendering="crispEdges"><rect width="15" height="15" fill="#000"/><rect x="1" y="1" width="13" height="1" fill="#ffff00"/><rect x="1" y="2" width="1" height="1" fill="#ffff00"/><rect x="13" y="2" width="1" height="1" fill="#ffff00"/><rect x="1" y="3" width="1" height="1" fill="#ffff00"/><rect x="13" y="3" width="1" height="1" fill="#ffff00"/><rect x="1" y="4" width="1" height="1" fill="#ffff00"/><rect x="13" y="4" width="1" height="1" fill="#ffff00"/><rect x="1" y="5" width="1" height="1" fill="#ffff00"/><rect x="11" y="5" width="1" height="1" fill="#ffff00"/><rect x="13" y="5" width="1" height="1" fill="#ffff00"/><rect x="1" y="6" width="1" height="1" fill="#ffff00"/><rect x="13" y="6" width="1" height="1" fill="#ffff00"/><rect x="1" y="7" width="1" height="1" fill="#ffff00"/><rect x="9" y="7" width="1" height="1" fill="#ffff00"/><rect x="13" y="7" width="1" height="1" fill="#ffff00"/><rect x="1" y="8" width="1" height="1" fill="#ffff00"/><rect x="13" y="8" width="1" height="1" fill="#ffff00"/><rect x="1" y="9" width="1" height="1" fill="#ffff00"/><rect x="7" y="9" width="1" height="1" fill="#ffff00"/><rect x="13" y="9" width="1" height="1" fill="#ffff00"/><rect x="1" y="10" width="1" height="1" fill="#ffff00"/><rect x="13" y="10" width="1" height="1" fill="#ffff00"/><rect x="1" y="11" width="1" height="1" fill="#ffff00"/><rect x="5" y="11" width="1" height="1" fill="#ffff00"/><rect x="13" y="11" width="1" height="1" fill="#ffff00"/><rect x="1" y="12" width="1" height="1" fill="#ffff00"/><rect x="13" y="12" width="1" height="1" fill="#ffff00"/><rect x="1" y="13" width="13" height="1" fill="#ffff00"/></svg>
<div class="t" style="left:22px;top:412px;font-size:11.2px;line-height:12px;color:#1a1a1a;letter-spacing:0.455px;">Nimp</div>
<div class="t" style="left:87.5px;top:412px;font-size:11.2px;line-height:12px;color:#1a1a1a;letter-spacing:0.226px;">drw</div>
<div class="cb2" style="left:120px;top:412px"></div>
<svg class="a" style="left:120px;top:412px" width="12" height="12"><path d="M2 3.8L5 6.8L10.6 1.7V4.7L5 10.3L2 7.3z" fill="#cc0000"/></svg>
<div class="cb2" style="left:142px;top:412px"></div>
<svg class="a" style="left:142px;top:412px" width="12" height="12"><path d="M2 3.8L5 6.8L10.6 1.7V4.7L5 10.3L2 7.3z" fill="#cc0000"/></svg>
<svg class="a" style="left:3px;top:428px" width="15" height="15" shape-rendering="crispEdges"><rect width="15" height="15" fill="#000"/><rect x="1" y="1" width="13" height="1" fill="#ff0000"/><rect x="1" y="2" width="1" height="1" fill="#ff0000"/><rect x="6" y="2" width="1" height="1" fill="#ff0000"/><rect x="13" y="2" width="1" height="1" fill="#ff0000"/><rect x="1" y="3" width="1" height="1" fill="#ff0000"/><rect x="6" y="3" width="1" height="1" fill="#ff0000"/><rect x="13" y="3" width="1" height="1" fill="#ff0000"/><rect x="1" y="4" width="1" height="1" fill="#ff0000"/><rect x="3" y="4" width="4" height="1" fill="#ff0000"/><rect x="11" y="4" width="3" height="1" fill="#ff0000"/><rect x="1" y="5" width="1" height="1" fill="#ff0000"/><rect x="3" y="5" width="1" height="1" fill="#ff0000"/><rect x="11" y="5" width="1" height="1" fill="#ff0000"/><rect x="13" y="5" width="1" height="1" fill="#ff0000"/><rect x="1" y="6" width="1" height="1" fill="#ff0000"/><rect x="3" y="6" width="1" height="1" fill="#ff0000"/><rect x="11" y="6" width="1" height="1" fill="#ff0000"/><rect x="13" y="6" width="1" height="1" fill="#ff0000"/><rect x="1" y="7" width="1" height="1" fill="#ff0000"/><rect x="3" y="7" width="1" height="1" fill="#ff0000"/><rect x="11" y="7" width="1" height="1" fill="#ff0000"/><rect x="13" y="7" width="1" height="1" fill="#ff0000"/><rect x="1" y="8" width="1" height="1" fill="#ff0000"/><rect x="3" y="8" width="4" height="1" fill="#ff0000"/><rect x="11" y="8" width="3" height="1" fill="#ff0000"/><rect x="1" y="9" width="1" height="1" fill="#ff0000"/><rect x="6" y="9" width="1" height="1" fill="#ff0000"/><rect x="13" y="9" width="1" height="1" fill="#ff0000"/><rect x="1" y="10" width="1" height="1" fill="#ff0000"/><rect x="6" y="10" width="1" height="1" fill="#ff0000"/><rect x="13" y="10" width="1" height="1" fill="#ff0000"/><rect x="1" y="11" width="1" height="1" fill="#ff0000"/><rect x="6" y="11" width="1" height="1" fill="#ff0000"/><rect x="13" y="11" width="1" height="1" fill="#ff0000"/><rect x="1" y="12" width="1" height="1" fill="#ff0000"/><rect x="3" y="12" width="4" height="1" fill="#ff0000"/><rect x="11" y="12" width="3" height="1" fill="#ff0000"/><rect x="1" y="13" width="13" height="1" fill="#ff0000"/></svg>
<div class="t" style="left:22px;top:429px;font-size:11.2px;line-height:12px;color:#1a1a1a;letter-spacing:0.03px;">Phvt</div>
<div class="t" style="left:87.5px;top:429px;font-size:11.2px;line-height:12px;color:#1a1a1a;letter-spacing:0.226px;">drw</div>
<div class="cb2" style="left:120px;top:429px"></div>
<svg class="a" style="left:120px;top:429px" width="12" height="12"><path d="M2 3.8L5 6.8L10.6 1.7V4.7L5 10.3L2 7.3z" fill="#cc0000"/></svg>
<div class="cb2" style="left:142px;top:429px"></div>
<svg class="a" style="left:142px;top:429px" width="12" height="12"><path d="M2 3.8L5 6.8L10.6 1.7V4.7L5 10.3L2 7.3z" fill="#cc0000"/></svg>
<svg class="a" style="left:3px;top:445px" width="15" height="15" shape-rendering="crispEdges"><rect width="15" height="15" fill="#000"/><rect x="1" y="1" width="13" height="1" fill="#ff0000"/><rect x="1" y="2" width="13" height="1" fill="#ff0000"/><rect x="1" y="3" width="13" height="1" fill="#ff0000"/><rect x="1" y="4" width="3" height="1" fill="#ff0000"/><rect x="11" y="4" width="3" height="1" fill="#ff0000"/><rect x="1" y="5" width="3" height="1" fill="#ff0000"/><rect x="11" y="5" width="3" height="1" fill="#ff0000"/><rect x="1" y="6" width="3" height="1" fill="#ff0000"/><rect x="11" y="6" width="3" height="1" fill="#ff0000"/><rect x="1" y="7" width="3" height="1" fill="#ff0000"/><rect x="11" y="7" width="3" height="1" fill="#ff0000"/><rect x="1" y="8" width="3" height="1" fill="#ff0000"/><rect x="11" y="8" width="3" height="1" fill="#ff0000"/><rect x="1" y="9" width="3" height="1" fill="#ff0000"/><rect x="11" y="9" width="3" height="1" fill="#ff0000"/><rect x="1" y="10" width="3" height="1" fill="#ff0000"/><rect x="11" y="10" width="3" height="1" fill="#ff0000"/><rect x="1" y="11" width="13" height="1" fill="#ff0000"/><rect x="1" y="12" width="13" height="1" fill="#ff0000"/><rect x="1" y="13" width="13" height="1" fill="#ff0000"/></svg>
<div class="t" style="left:22px;top:446px;font-size:11.2px;line-height:12px;color:#1a1a1a;letter-spacing:0.043px;">Plvt</div>
<div class="t" style="left:87.5px;top:446px;font-size:11.2px;line-height:12px;color:#1a1a1a;letter-spacing:0.226px;">drw</div>
<div class="cb2" style="left:120px;top:446px"></div>
<svg class="a" style="left:120px;top:446px" width="12" height="12"><path d="M2 3.8L5 6.8L10.6 1.7V4.7L5 10.3L2 7.3z" fill="#cc0000"/></svg>
<div class="cb2" style="left:142px;top:446px"></div>
<svg class="a" style="left:142px;top:446px" width="12" height="12"><path d="M2 3.8L5 6.8L10.6 1.7V4.7L5 10.3L2 7.3z" fill="#cc0000"/></svg>
<svg class="a" style="left:3px;top:462px" width="15" height="15" shape-rendering="crispEdges"><rect width="15" height="15" fill="#000"/><rect x="1" y="1" width="13" height="1" fill="#ff0000"/><rect x="1" y="2" width="1" height="1" fill="#ff0000"/><rect x="13" y="2" width="1" height="1" fill="#ff0000"/><rect x="1" y="3" width="1" height="1" fill="#ff0000"/><rect x="13" y="3" width="1" height="1" fill="#ff0000"/><rect x="1" y="4" width="1" height="1" fill="#ff0000"/><rect x="13" y="4" width="1" height="1" fill="#ff0000"/><rect x="1" y="5" width="1" height="1" fill="#ff0000"/><rect x="13" y="5" width="1" height="1" fill="#ff0000"/><rect x="1" y="6" width="1" height="1" fill="#ff0000"/><rect x="13" y="6" width="1" height="1" fill="#ff0000"/><rect x="1" y="7" width="1" height="1" fill="#ff0000"/><rect x="13" y="7" width="1" height="1" fill="#ff0000"/><rect x="1" y="8" width="1" height="1" fill="#ff0000"/><rect x="13" y="8" width="1" height="1" fill="#ff0000"/><rect x="1" y="9" width="1" height="1" fill="#ff0000"/><rect x="13" y="9" width="1" height="1" fill="#ff0000"/><rect x="1" y="10" width="1" height="1" fill="#ff0000"/><rect x="13" y="10" width="1" height="1" fill="#ff0000"/><rect x="1" y="11" width="1" height="1" fill="#ff0000"/><rect x="13" y="11" width="1" height="1" fill="#ff0000"/><rect x="1" y="12" width="1" height="1" fill="#ff0000"/><rect x="13" y="12" width="1" height="1" fill="#ff0000"/><rect x="1" y="13" width="13" height="1" fill="#ff0000"/></svg>
<div class="t" style="left:22px;top:463px;font-size:11.2px;line-height:12px;color:#1a1a1a;letter-spacing:0.033px;">Nzvt</div>
<div class="t" style="left:87.5px;top:463px;font-size:11.2px;line-height:12px;color:#1a1a1a;letter-spacing:0.226px;">drw</div>
<div class="cb2" style="left:120px;top:463px"></div>
<svg class="a" style="left:120px;top:463px" width="12" height="12"><path d="M2 3.8L5 6.8L10.6 1.7V4.7L5 10.3L2 7.3z" fill="#cc0000"/></svg>
<div class="cb2" style="left:142px;top:463px"></div>
<svg class="a" style="left:142px;top:463px" width="12" height="12"><path d="M2 3.8L5 6.8L10.6 1.7V4.7L5 10.3L2 7.3z" fill="#cc0000"/></svg>
<svg class="a" style="left:3px;top:479px" width="15" height="15" shape-rendering="crispEdges"><rect width="15" height="15" fill="#000"/><rect x="1" y="1" width="1" height="1" fill="#0000ff"/><rect x="4" y="1" width="5" height="1" fill="#0000ff"/><rect x="12" y="1" width="1" height="1" fill="#0000ff"/><rect x="2" y="2" width="1" height="1" fill="#0000ff"/><rect x="3" y="3" width="1" height="1" fill="#0000ff"/><rect x="4" y="4" width="1" height="1" fill="#0000ff"/><rect x="13" y="4" width="1" height="1" fill="#0000ff"/><rect x="1" y="5" width="1" height="1" fill="#0000ff"/><rect x="5" y="5" width="1" height="1" fill="#0000ff"/><rect x="13" y="5" width="1" height="1" fill="#0000ff"/><rect x="1" y="6" width="1" height="1" fill="#0000ff"/><rect x="6" y="6" width="1" height="1" fill="#0000ff"/><rect x="13" y="6" width="1" height="1" fill="#0000ff"/><rect x="1" y="7" width="1" height="1" fill="#0000ff"/><rect x="7" y="7" width="1" height="1" fill="#0000ff"/><rect x="13" y="7" width="1" height="1" fill="#0000ff"/><rect x="1" y="8" width="1" height="1" fill="#0000ff"/><rect x="8" y="8" width="1" height="1" fill="#0000ff"/><rect x="13" y="8" width="1" height="1" fill="#0000ff"/><rect x="1" y="9" width="1" height="1" fill="#0000ff"/><rect x="9" y="9" width="1" height="1" fill="#0000ff"/><rect x="10" y="10" width="1" height="1" fill="#0000ff"/><rect x="11" y="11" width="1" height="1" fill="#0000ff"/><rect x="12" y="12" width="2" height="1" fill="#0000ff"/><rect x="1" y="13" width="1" height="1" fill="#0000ff"/><rect x="5" y="13" width="5" height="1" fill="#0000ff"/><rect x="12" y="13" width="2" height="1" fill="#0000ff"/></svg>
<div class="t" style="left:22px;top:480px;font-size:11.2px;line-height:12px;color:#1a1a1a;">SiProt</div>
<div class="t" style="left:87.5px;top:480px;font-size:11.2px;line-height:12px;color:#1a1a1a;letter-spacing:0.226px;">drw</div>
<div class="cb2" style="left:120px;top:480px"></div>
<svg class="a" style="left:120px;top:480px" width="12" height="12"><path d="M2 3.8L5 6.8L10.6 1.7V4.7L5 10.3L2 7.3z" fill="#cc0000"/></svg>
<div class="cb2" style="left:142px;top:480px"></div>
<svg class="a" style="left:142px;top:480px" width="12" height="12"><path d="M2 3.8L5 6.8L10.6 1.7V4.7L5 10.3L2 7.3z" fill="#cc0000"/></svg>
<svg class="a" style="left:3px;top:496px" width="15" height="15" shape-rendering="crispEdges"><rect width="15" height="15" fill="#000"/><rect x="1" y="1" width="13" height="13" fill="#fff"/></svg>
<div class="t" style="left:22px;top:497px;font-size:11.2px;line-height:12px;color:#1a1a1a;letter-spacing:0.114px;">Cont</div>
<div class="t" style="left:87.5px;top:497px;font-size:11.2px;line-height:12px;color:#1a1a1a;letter-spacing:0.226px;">drw</div>
<div class="cb2" style="left:120px;top:497px"></div>
<svg class="a" style="left:120px;top:497px" width="12" height="12"><path d="M2 3.8L5 6.8L10.6 1.7V4.7L5 10.3L2 7.3z" fill="#cc0000"/></svg>
<div class="cb2" style="left:142px;top:497px"></div>
<svg class="a" style="left:142px;top:497px" width="12" height="12"><path d="M2 3.8L5 6.8L10.6 1.7V4.7L5 10.3L2 7.3z" fill="#cc0000"/></svg>
<div class="a" style="left:2px;top:511px;width:155px;height:19px;background:#000"></div>
<div class="a" style="left:18px;top:513px;width:137px;height:15px;background:#fff"></div>
<svg class="a" style="left:3px;top:513px" width="15" height="15" shape-rendering="crispEdges"><rect width="15" height="15" fill="#000"/><rect x="1" y="1" width="13" height="1" fill="#0000ff"/><rect x="1" y="2" width="1" height="1" fill="#0000ff"/><rect x="3" y="2" width="1" height="1" fill="#0000ff"/><rect x="7" y="2" width="1" height="1" fill="#0000ff"/><rect x="11" y="2" width="1" height="1" fill="#0000ff"/><rect x="13" y="2" width="1" height="1" fill="#0000ff"/><rect x="1" y="3" width="1" height="1" fill="#0000ff"/><rect x="13" y="3" width="1" height="1" fill="#0000ff"/><rect x="1" y="4" width="1" height="1" fill="#0000ff"/><rect x="5" y="4" width="1" height="1" fill="#0000ff"/><rect x="9" y="4" width="1" height="1" fill="#0000ff"/><rect x="13" y="4" width="1" height="1" fill="#0000ff"/><rect x="1" y="5" width="1" height="1" fill="#0000ff"/><rect x="13" y="5" width="1" height="1" fill="#0000ff"/><rect x="1" y="6" width="1" height="1" fill="#0000ff"/><rect x="3" y="6" width="1" height="1" fill="#0000ff"/><rect x="7" y="6" width="1" height="1" fill="#0000ff"/><rect x="11" y="6" width="1" height="1" fill="#0000ff"/><rect x="13" y="6" width="1" height="1" fill="#0000ff"/><rect x="1" y="7" width="1" height="1" fill="#0000ff"/><rect x="13" y="7" width="1" height="1" fill="#0000ff"/><rect x="1" y="8" width="1" height="1" fill="#0000ff"/><rect x="5" y="8" width="1" height="1" fill="#0000ff"/><rect x="9" y="8" width="1" height="1" fill="#0000ff"/><rect x="13" y="8" width="1" height="1" fill="#0000ff"/><rect x="1" y="9" width="1" height="1" fill="#0000ff"/><rect x="13" y="9" width="1" height="1" fill="#0000ff"/><rect x="1" y="10" width="1" height="1" fill="#0000ff"/><rect x="3" y="10" width="1" height="1" fill="#0000ff"/><rect x="7" y="10" width="1" height="1" fill="#0000ff"/><rect x="11" y="10" width="1" height="1" fill="#0000ff"/><rect x="13" y="10" width="1" height="1" fill="#0000ff"/><rect x="1" y="11" width="1" height="1" fill="#0000ff"/><rect x="13" y="11" width="1" height="1" fill="#0000ff"/><rect x="1" y="12" width="1" height="1" fill="#0000ff"/><rect x="5" y="12" width="1" height="1" fill="#0000ff"/><rect x="9" y="12" width="1" height="1" fill="#0000ff"/><rect x="13" y="12" width="1" height="1" fill="#0000ff"/><rect x="1" y="13" width="13" height="1" fill="#0000ff"/></svg>
<div class="t" style="left:22px;top:514px;font-size:11.2px;line-height:12px;color:#1a1a1a;letter-spacing:0.077px;">Metal1</div>
<div class="t" style="left:87.5px;top:514px;font-size:11.2px;line-height:12px;color:#1a1a1a;letter-spacing:0.226px;">drw</div>
<div class="cb2" style="left:120px;top:514px"></div>
<svg class="a" style="left:120px;top:514px" width="12" height="12"><path d="M2 3.8L5 6.8L10.6 1.7V4.7L5 10.3L2 7.3z" fill="#cc0000"/></svg>
<div class="cb2" style="left:142px;top:514px"></div>
<svg class="a" style="left:142px;top:514px" width="12" height="12"><path d="M2 3.8L5 6.8L10.6 1.7V4.7L5 10.3L2 7.3z" fill="#cc0000"/></svg>
<svg class="a" style="left:3px;top:530px" width="15" height="15" shape-rendering="crispEdges"><rect width="15" height="15" fill="#000"/><rect x="1" y="1" width="13" height="13" fill="#38b8ff"/></svg>
<div class="t" style="left:21.7px;top:531px;font-size:11.2px;line-height:12px;color:#1a1a1a;letter-spacing:-0.372px;">Via1</div>
<div class="t" style="left:87.5px;top:531px;font-size:11.2px;line-height:12px;color:#1a1a1a;letter-spacing:0.226px;">drw</div>
<div class="cb2" style="left:120px;top:531px"></div>
<svg class="a" style="left:120px;top:531px" width="12" height="12"><path d="M2 3.8L5 6.8L10.6 1.7V4.7L5 10.3L2 7.3z" fill="#cc0000"/></svg>
<div class="cb2" style="left:142px;top:531px"></div>
<svg class="a" style="left:142px;top:531px" width="12" height="12"><path d="M2 3.8L5 6.8L10.6 1.7V4.7L5 10.3L2 7.3z" fill="#cc0000"/></svg>
<svg class="a" style="left:3px;top:547px" width="15" height="15" shape-rendering="crispEdges"><rect width="15" height="15" fill="#000"/><rect x="1" y="1" width="13" height="1" fill="#ff0000"/><rect x="1" y="2" width="1" height="1" fill="#ff0000"/><rect x="3" y="2" width="1" height="1" fill="#ff0000"/><rect x="7" y="2" width="1" height="1" fill="#ff0000"/><rect x="11" y="2" width="1" height="1" fill="#ff0000"/><rect x="13" y="2" width="1" height="1" fill="#ff0000"/><rect x="1" y="3" width="1" height="1" fill="#ff0000"/><rect x="13" y="3" width="1" height="1" fill="#ff0000"/><rect x="1" y="4" width="1" height="1" fill="#ff0000"/><rect x="5" y="4" width="1" height="1" fill="#ff0000"/><rect x="9" y="4" width="1" height="1" fill="#ff0000"/><rect x="13" y="4" width="1" height="1" fill="#ff0000"/><rect x="1" y="5" width="1" height="1" fill="#ff0000"/><rect x="13" y="5" width="1" height="1" fill="#ff0000"/><rect x="1" y="6" width="1" height="1" fill="#ff0000"/><rect x="3" y="6" width="1" height="1" fill="#ff0000"/><rect x="7" y="6" width="1" height="1" fill="#ff0000"/><rect x="11" y="6" width="1" height="1" fill="#ff0000"/><rect x="13" y="6" width="1" height="1" fill="#ff0000"/><rect x="1" y="7" width="1" height="1" fill="#ff0000"/><rect x="13" y="7" width="1" height="1" fill="#ff0000"/><rect x="1" y="8" width="1" height="1" fill="#ff0000"/><rect x="5" y="8" width="1" height="1" fill="#ff0000"/><rect x="9" y="8" width="1" height="1" fill="#ff0000"/><rect x="13" y="8" width="1" height="1" fill="#ff0000"/><rect x="1" y="9" width="1" height="1" fill="#ff0000"/><rect x="13" y="9" width="1" height="1" fill="#ff0000"/><rect x="1" y="10" width="1" height="1" fill="#ff0000"/><rect x="3" y="10" width="1" height="1" fill="#ff0000"/><rect x="7" y="10" width="1" height="1" fill="#ff0000"/><rect x="11" y="10" width="1" height="1" fill="#ff0000"/><rect x="13" y="10" width="1" height="1" fill="#ff0000"/><rect x="1" y="11" width="1" height="1" fill="#ff0000"/><rect x="13" y="11" width="1" height="1" fill="#ff0000"/><rect x="1" y="12" width="1" height="1" fill="#ff0000"/><rect x="5" y="12" width="1" height="1" fill="#ff0000"/><rect x="9" y="12" width="1" height="1" fill="#ff0000"/><rect x="13" y="12" width="1" height="1" fill="#ff0000"/><rect x="1" y="13" width="13" height="1" fill="#ff0000"/></svg>
<div class="t" style="left:22px;top:548px;font-size:11.2px;line-height:12px;color:#1a1a1a;letter-spacing:0.177px;">Metal2</div>
<div class="t" style="left:87.5px;top:548px;font-size:11.2px;line-height:12px;color:#1a1a1a;letter-spacing:0.226px;">drw</div>
<div class="cb2" style="left:120px;top:548px"></div>
<svg class="a" style="left:120px;top:548px" width="12" height="12"><path d="M2 3.8L5 6.8L10.6 1.7V4.7L5 10.3L2 7.3z" fill="#cc0000"/></svg>
<div class="cb2" style="left:142px;top:548px"></div>
<svg class="a" style="left:142px;top:548px" width="12" height="12"><path d="M2 3.8L5 6.8L10.6 1.7V4.7L5 10.3L2 7.3z" fill="#cc0000"/></svg>
<svg class="a" style="left:3px;top:564px" width="15" height="15" shape-rendering="crispEdges"><rect width="15" height="15" fill="#000"/><rect x="1" y="1" width="13" height="13" fill="#ff8000"/></svg>
<div class="t" style="left:21.7px;top:565px;font-size:11.2px;line-height:12px;color:#1a1a1a;letter-spacing:-0.306px;">Via2</div>
<div class="t" style="left:87.5px;top:565px;font-size:11.2px;line-height:12px;color:#1a1a1a;letter-spacing:0.226px;">drw</div>
<div class="cb2" style="left:120px;top:565px"></div>
<svg class="a" style="left:120px;top:565px" width="12" height="12"><path d="M2 3.8L5 6.8L10.6 1.7V4.7L5 10.3L2 7.3z" fill="#cc0000"/></svg>
<div class="cb2" style="left:142px;top:565px"></div>
<svg class="a" style="left:142px;top:565px" width="12" height="12"><path d="M2 3.8L5 6.8L10.6 1.7V4.7L5 10.3L2 7.3z" fill="#cc0000"/></svg>
<svg class="a" style="left:3px;top:581px" width="15" height="15" shape-rendering="crispEdges"><rect width="15" height="15" fill="#000"/><rect x="1" y="1" width="13" height="1" fill="#00e060"/><rect x="1" y="2" width="2" height="1" fill="#00e060"/><rect x="13" y="2" width="1" height="1" fill="#00e060"/><rect x="1" y="3" width="1" height="1" fill="#00e060"/><rect x="3" y="3" width="1" height="1" fill="#00e060"/><rect x="13" y="3" width="1" height="1" fill="#00e060"/><rect x="1" y="4" width="1" height="1" fill="#00e060"/><rect x="4" y="4" width="1" height="1" fill="#00e060"/><rect x="13" y="4" width="1" height="1" fill="#00e060"/><rect x="1" y="5" width="1" height="1" fill="#00e060"/><rect x="5" y="5" width="1" height="1" fill="#00e060"/><rect x="13" y="5" width="1" height="1" fill="#00e060"/><rect x="1" y="6" width="1" height="1" fill="#00e060"/><rect x="6" y="6" width="1" height="1" fill="#00e060"/><rect x="13" y="6" width="1" height="1" fill="#00e060"/><rect x="1" y="7" width="1" height="1" fill="#00e060"/><rect x="7" y="7" width="1" height="1" fill="#00e060"/><rect x="13" y="7" width="1" height="1" fill="#00e060"/><rect x="1" y="8" width="1" height="1" fill="#00e060"/><rect x="8" y="8" width="1" height="1" fill="#00e060"/><rect x="13" y="8" width="1" height="1" fill="#00e060"/><rect x="1" y="9" width="1" height="1" fill="#00e060"/><rect x="9" y="9" width="1" height="1" fill="#00e060"/><rect x="13" y="9" width="1" height="1" fill="#00e060"/><rect x="1" y="10" width="1" height="1" fill="#00e060"/><rect x="10" y="10" width="1" height="1" fill="#00e060"/><rect x="13" y="10" width="1" height="1" fill="#00e060"/><rect x="1" y="11" width="1" height="1" fill="#00e060"/><rect x="11" y="11" width="1" height="1" fill="#00e060"/><rect x="13" y="11" width="1" height="1" fill="#00e060"/><rect x="1" y="12" width="1" height="1" fill="#00e060"/><rect x="12" y="12" width="2" height="1" fill="#00e060"/><rect x="1" y="13" width="13" height="1" fill="#00e060"/></svg>
<div class="t" style="left:22px;top:582px;font-size:11.2px;line-height:12px;color:#1a1a1a;letter-spacing:0.177px;">Metal3</div>
<div class="t" style="left:87.5px;top:582px;font-size:11.2px;line-height:12px;color:#1a1a1a;letter-spacing:0.226px;">drw</div>
<div class="cb2" style="left:120px;top:582px"></div>
<svg class="a" style="left:120px;top:582px" width="12" height="12"><path d="M2 3.8L5 6.8L10.6 1.7V4.7L5 10.3L2 7.3z" fill="#cc0000"/></svg>
<div class="cb2" style="left:142px;top:582px"></div>
<svg class="a" style="left:142px;top:582px" width="12" height="12"><path d="M2 3.8L5 6.8L10.6 1.7V4.7L5 10.3L2 7.3z" fill="#cc0000"/></svg>
<svg class="a" style="left:3px;top:598px" width="15" height="15" shape-rendering="crispEdges"><rect width="15" height="15" fill="#000"/><rect x="1" y="1" width="13" height="13" fill="#9a00f0"/></svg>
<div class="t" style="left:21.7px;top:599px;font-size:11.2px;line-height:12px;color:#1a1a1a;letter-spacing:-0.306px;">Via3</div>
<div class="t" style="left:87.5px;top:599px;font-size:11.2px;line-height:12px;color:#1a1a1a;letter-spacing:0.226px;">drw</div>
<div class="cb2" style="left:120px;top:599px"></div>
<svg class="a" style="left:120px;top:599px" width="12" height="12"><path d="M2 3.8L5 6.8L10.6 1.7V4.7L5 10.3L2 7.3z" fill="#cc0000"/></svg>
<div class="cb2" style="left:142px;top:599px"></div>
<svg class="a" style="left:142px;top:599px" width="12" height="12"><path d="M2 3.8L5 6.8L10.6 1.7V4.7L5 10.3L2 7.3z" fill="#cc0000"/></svg>
<svg class="a" style="left:3px;top:615px" width="15" height="15" shape-rendering="crispEdges"><rect width="15" height="15" fill="#000"/><rect x="1" y="1" width="13" height="1" fill="#fcbcf8"/><rect x="1" y="2" width="2" height="1" fill="#fcbcf8"/><rect x="10" y="2" width="1" height="1" fill="#fcbcf8"/><rect x="13" y="2" width="1" height="1" fill="#fcbcf8"/><rect x="1" y="3" width="2" height="1" fill="#fcbcf8"/><rect x="10" y="3" width="1" height="1" fill="#fcbcf8"/><rect x="13" y="3" width="1" height="1" fill="#fcbcf8"/><rect x="1" y="4" width="2" height="1" fill="#fcbcf8"/><rect x="10" y="4" width="1" height="1" fill="#fcbcf8"/><rect x="13" y="4" width="1" height="1" fill="#fcbcf8"/><rect x="1" y="5" width="1" height="1" fill="#fcbcf8"/><rect x="3" y="5" width="1" height="1" fill="#fcbcf8"/><rect x="11" y="5" width="1" height="1" fill="#fcbcf8"/><rect x="13" y="5" width="1" height="1" fill="#fcbcf8"/><rect x="1" y="6" width="1" height="1" fill="#fcbcf8"/><rect x="3" y="6" width="1" height="1" fill="#fcbcf8"/><rect x="11" y="6" width="1" height="1" fill="#fcbcf8"/><rect x="13" y="6" width="1" height="1" fill="#fcbcf8"/><rect x="1" y="7" width="1" height="1" fill="#fcbcf8"/><rect x="3" y="7" width="1" height="1" fill="#fcbcf8"/><rect x="11" y="7" width="1" height="1" fill="#fcbcf8"/><rect x="13" y="7" width="1" height="1" fill="#fcbcf8"/><rect x="1" y="8" width="1" height="1" fill="#fcbcf8"/><rect x="3" y="8" width="1" height="1" fill="#fcbcf8"/><rect x="11" y="8" width="1" height="1" fill="#fcbcf8"/><rect x="13" y="8" width="1" height="1" fill="#fcbcf8"/><rect x="1" y="9" width="2" height="1" fill="#fcbcf8"/><rect x="10" y="9" width="1" height="1" fill="#fcbcf8"/><rect x="13" y="9" width="1" height="1" fill="#fcbcf8"/><rect x="1" y="10" width="2" height="1" fill="#fcbcf8"/><rect x="10" y="10" width="1" height="1" fill="#fcbcf8"/><rect x="13" y="10" width="1" height="1" fill="#fcbcf8"/><rect x="1" y="11" width="2" height="1" fill="#fcbcf8"/><rect x="10" y="11" width="1" height="1" fill="#fcbcf8"/><rect x="13" y="11" width="1" height="1" fill="#fcbcf8"/><rect x="1" y="12" width="2" height="1" fill="#fcbcf8"/><rect x="10" y="12" width="1" height="1" fill="#fcbcf8"/><rect x="13" y="12" width="1" height="1" fill="#fcbcf8"/><rect x="1" y="13" width="13" height="1" fill="#fcbcf8"/></svg>
<div class="t" style="left:22px;top:616px;font-size:11.2px;line-height:12px;color:#1a1a1a;letter-spacing:0.277px;">Metal4</div>
<div class="t" style="left:87.5px;top:616px;font-size:11.2px;line-height:12px;color:#1a1a1a;letter-spacing:0.226px;">drw</div>
<div class="cb2" style="left:120px;top:616px"></div>
<svg class="a" style="left:120px;top:616px" width="12" height="12"><path d="M2 3.8L5 6.8L10.6 1.7V4.7L5 10.3L2 7.3z" fill="#cc0000"/></svg>
<div class="cb2" style="left:142px;top:616px"></div>
<svg class="a" style="left:142px;top:616px" width="12" height="12"><path d="M2 3.8L5 6.8L10.6 1.7V4.7L5 10.3L2 7.3z" fill="#cc0000"/></svg>
<svg class="a" style="left:3px;top:632px" width="15" height="15" shape-rendering="crispEdges"><rect width="15" height="15" fill="#000"/><rect x="1" y="1" width="13" height="13" fill="#802828"/></svg>
<div class="t" style="left:21.7px;top:633px;font-size:11.2px;line-height:12px;color:#1a1a1a;letter-spacing:-0.306px;">Via4</div>
<div class="t" style="left:87.5px;top:633px;font-size:11.2px;line-height:12px;color:#1a1a1a;letter-spacing:0.226px;">drw</div>
<div class="cb2" style="left:120px;top:633px"></div>
<svg class="a" style="left:120px;top:633px" width="12" height="12"><path d="M2 3.8L5 6.8L10.6 1.7V4.7L5 10.3L2 7.3z" fill="#cc0000"/></svg>
<div class="cb2" style="left:142px;top:633px"></div>
<svg class="a" style="left:142px;top:633px" width="12" height="12"><path d="M2 3.8L5 6.8L10.6 1.7V4.7L5 10.3L2 7.3z" fill="#cc0000"/></svg>
<svg class="a" style="left:3px;top:649px" width="15" height="15" shape-rendering="crispEdges"><rect width="15" height="15" fill="#000"/><rect x="1" y="1" width="13" height="1" fill="#ffffc8"/><rect x="1" y="2" width="2" height="1" fill="#ffffc8"/><rect x="13" y="2" width="1" height="1" fill="#ffffc8"/><rect x="1" y="3" width="2" height="1" fill="#ffffc8"/><rect x="13" y="3" width="1" height="1" fill="#ffffc8"/><rect x="1" y="4" width="1" height="1" fill="#ffffc8"/><rect x="13" y="4" width="1" height="1" fill="#ffffc8"/><rect x="1" y="5" width="1" height="1" fill="#ffffc8"/><rect x="13" y="5" width="1" height="1" fill="#ffffc8"/><rect x="1" y="6" width="1" height="1" fill="#ffffc8"/><rect x="13" y="6" width="1" height="1" fill="#ffffc8"/><rect x="1" y="7" width="1" height="1" fill="#ffffc8"/><rect x="10" y="7" width="1" height="1" fill="#ffffc8"/><rect x="13" y="7" width="1" height="1" fill="#ffffc8"/><rect x="1" y="8" width="1" height="1" fill="#ffffc8"/><rect x="10" y="8" width="1" height="1" fill="#ffffc8"/><rect x="13" y="8" width="1" height="1" fill="#ffffc8"/><rect x="1" y="9" width="1" height="1" fill="#ffffc8"/><rect x="10" y="9" width="1" height="1" fill="#ffffc8"/><rect x="13" y="9" width="1" height="1" fill="#ffffc8"/><rect x="1" y="10" width="1" height="1" fill="#ffffc8"/><rect x="10" y="10" width="1" height="1" fill="#ffffc8"/><rect x="13" y="10" width="1" height="1" fill="#ffffc8"/><rect x="1" y="11" width="1" height="1" fill="#ffffc8"/><rect x="10" y="11" width="1" height="1" fill="#ffffc8"/><rect x="13" y="11" width="1" height="1" fill="#ffffc8"/><rect x="1" y="12" width="1" height="1" fill="#ffffc8"/><rect x="13" y="12" width="1" height="1" fill="#ffffc8"/><rect x="1" y="13" width="13" height="1" fill="#ffffc8"/></svg>
<div class="t" style="left:22px;top:650px;font-size:11.2px;line-height:12px;color:#1a1a1a;letter-spacing:0.177px;">Metal5</div>
<div class="t" style="left:87.5px;top:650px;font-size:11.2px;line-height:12px;color:#1a1a1a;letter-spacing:0.226px;">drw</div>
<div class="cb2" style="left:120px;top:650px"></div>
<svg class="a" style="left:120px;top:650px" width="12" height="12"><path d="M2 3.8L5 6.8L10.6 1.7V4.7L5 10.3L2 7.3z" fill="#cc0000"/></svg>
<div class="cb2" style="left:142px;top:650px"></div>
<svg class="a" style="left:142px;top:650px" width="12" height="12"><path d="M2 3.8L5 6.8L10.6 1.7V4.7L5 10.3L2 7.3z" fill="#cc0000"/></svg>
<svg class="a" style="left:3px;top:666px" width="15" height="15" shape-rendering="crispEdges"><rect width="15" height="15" fill="#000"/><rect x="1" y="1" width="13" height="13" fill="#00ffff"/></svg>
<div class="t" style="left:21.7px;top:667px;font-size:11.2px;line-height:12px;color:#1a1a1a;letter-spacing:-0.306px;">Via5</div>
<div class="t" style="left:87.5px;top:667px;font-size:11.2px;line-height:12px;color:#1a1a1a;letter-spacing:0.226px;">drw</div>
<div class="cb2" style="left:120px;top:667px"></div>
<svg class="a" style="left:120px;top:667px" width="12" height="12"><path d="M2 3.8L5 6.8L10.6 1.7V4.7L5 10.3L2 7.3z" fill="#cc0000"/></svg>
<div class="cb2" style="left:142px;top:667px"></div>
<svg class="a" style="left:142px;top:667px" width="12" height="12"><path d="M2 3.8L5 6.8L10.6 1.7V4.7L5 10.3L2 7.3z" fill="#cc0000"/></svg>
<svg class="a" style="left:3px;top:683px" width="15" height="15" shape-rendering="crispEdges"><rect width="15" height="15" fill="#000"/><rect x="1" y="1" width="13" height="1" fill="#d4e0ff"/><rect x="1" y="2" width="1" height="1" fill="#d4e0ff"/><rect x="3" y="2" width="1" height="1" fill="#d4e0ff"/><rect x="11" y="2" width="1" height="1" fill="#d4e0ff"/><rect x="13" y="2" width="1" height="1" fill="#d4e0ff"/><rect x="1" y="3" width="1" height="1" fill="#d4e0ff"/><rect x="3" y="3" width="1" height="1" fill="#d4e0ff"/><rect x="11" y="3" width="1" height="1" fill="#d4e0ff"/><rect x="13" y="3" width="1" height="1" fill="#d4e0ff"/><rect x="1" y="4" width="2" height="1" fill="#d4e0ff"/><rect x="10" y="4" width="1" height="1" fill="#d4e0ff"/><rect x="13" y="4" width="1" height="1" fill="#d4e0ff"/><rect x="1" y="5" width="2" height="1" fill="#d4e0ff"/><rect x="10" y="5" width="1" height="1" fill="#d4e0ff"/><rect x="13" y="5" width="1" height="1" fill="#d4e0ff"/><rect x="1" y="6" width="1" height="1" fill="#d4e0ff"/><rect x="9" y="6" width="1" height="1" fill="#d4e0ff"/><rect x="13" y="6" width="1" height="1" fill="#d4e0ff"/><rect x="1" y="7" width="1" height="1" fill="#d4e0ff"/><rect x="9" y="7" width="1" height="1" fill="#d4e0ff"/><rect x="13" y="7" width="1" height="1" fill="#d4e0ff"/><rect x="1" y="8" width="1" height="1" fill="#d4e0ff"/><rect x="8" y="8" width="1" height="1" fill="#d4e0ff"/><rect x="13" y="8" width="1" height="1" fill="#d4e0ff"/><rect x="1" y="9" width="1" height="1" fill="#d4e0ff"/><rect x="8" y="9" width="1" height="1" fill="#d4e0ff"/><rect x="13" y="9" width="1" height="1" fill="#d4e0ff"/><rect x="1" y="10" width="1" height="1" fill="#d4e0ff"/><rect x="7" y="10" width="1" height="1" fill="#d4e0ff"/><rect x="13" y="10" width="1" height="1" fill="#d4e0ff"/><rect x="1" y="11" width="1" height="1" fill="#d4e0ff"/><rect x="7" y="11" width="1" height="1" fill="#d4e0ff"/><rect x="13" y="11" width="1" height="1" fill="#d4e0ff"/><rect x="1" y="12" width="1" height="1" fill="#d4e0ff"/><rect x="6" y="12" width="1" height="1" fill="#d4e0ff"/><rect x="13" y="12" width="1" height="1" fill="#d4e0ff"/><rect x="1" y="13" width="13" height="1" fill="#d4e0ff"/></svg>
<div class="t" style="left:22px;top:684px;font-size:11.2px;line-height:12px;color:#1a1a1a;letter-spacing:0.177px;">Metal6</div>
<div class="t" style="left:87.5px;top:684px;font-size:11.2px;line-height:12px;color:#1a1a1a;letter-spacing:0.226px;">drw</div>
<div class="cb2" style="left:120px;top:684px"></div>
<svg class="a" style="left:120px;top:684px" width="12" height="12"><path d="M2 3.8L5 6.8L10.6 1.7V4.7L5 10.3L2 7.3z" fill="#cc0000"/></svg>
<div class="cb2" style="left:142px;top:684px"></div>
<svg class="a" style="left:142px;top:684px" width="12" height="12"><path d="M2 3.8L5 6.8L10.6 1.7V4.7L5 10.3L2 7.3z" fill="#cc0000"/></svg>
<svg class="a" style="left:3px;top:700px" width="15" height="15" shape-rendering="crispEdges"><rect width="15" height="15" fill="#000"/><rect x="1" y="1" width="13" height="13" fill="#dce8ff"/></svg>
<div class="t" style="left:21.7px;top:701px;font-size:11.2px;line-height:12px;color:#1a1a1a;letter-spacing:-0.306px;">Via6</div>
<div class="t" style="left:87.5px;top:701px;font-size:11.2px;line-height:12px;color:#1a1a1a;letter-spacing:0.226px;">drw</div>
<div class="cb2" style="left:120px;top:701px"></div>
<svg class="a" style="left:120px;top:701px" width="12" height="12"><path d="M2 3.8L5 6.8L10.6 1.7V4.7L5 10.3L2 7.3z" fill="#cc0000"/></svg>
<div class="cb2" style="left:142px;top:701px"></div>
<svg class="a" style="left:142px;top:701px" width="12" height="12"><path d="M2 3.8L5 6.8L10.6 1.7V4.7L5 10.3L2 7.3z" fill="#cc0000"/></svg>
<svg class="a" style="left:3px;top:717px" width="15" height="15" shape-rendering="crispEdges"><rect width="15" height="15" fill="#000"/><rect x="1" y="1" width="13" height="1" fill="#0088ff"/><rect x="1" y="2" width="1" height="1" fill="#0088ff"/><rect x="3" y="2" width="1" height="1" fill="#0088ff"/><rect x="13" y="2" width="1" height="1" fill="#0088ff"/><rect x="1" y="3" width="2" height="1" fill="#0088ff"/><rect x="13" y="3" width="1" height="1" fill="#0088ff"/><rect x="1" y="4" width="1" height="1" fill="#0088ff"/><rect x="13" y="4" width="1" height="1" fill="#0088ff"/><rect x="1" y="5" width="1" height="1" fill="#0088ff"/><rect x="13" y="5" width="1" height="1" fill="#0088ff"/><rect x="1" y="6" width="1" height="1" fill="#0088ff"/><rect x="4" y="6" width="5" height="1" fill="#0088ff"/><rect x="13" y="6" width="1" height="1" fill="#0088ff"/><rect x="1" y="7" width="1" height="1" fill="#0088ff"/><rect x="4" y="7" width="1" height="1" fill="#0088ff"/><rect x="6" y="7" width="1" height="1" fill="#0088ff"/><rect x="8" y="7" width="1" height="1" fill="#0088ff"/><rect x="13" y="7" width="1" height="1" fill="#0088ff"/><rect x="1" y="8" width="1" height="1" fill="#0088ff"/><rect x="4" y="8" width="1" height="1" fill="#0088ff"/><rect x="6" y="8" width="1" height="1" fill="#0088ff"/><rect x="8" y="8" width="1" height="1" fill="#0088ff"/><rect x="13" y="8" width="1" height="1" fill="#0088ff"/><rect x="1" y="9" width="1" height="1" fill="#0088ff"/><rect x="4" y="9" width="1" height="1" fill="#0088ff"/><rect x="8" y="9" width="1" height="1" fill="#0088ff"/><rect x="12" y="9" width="2" height="1" fill="#0088ff"/><rect x="1" y="10" width="1" height="1" fill="#0088ff"/><rect x="11" y="10" width="1" height="1" fill="#0088ff"/><rect x="13" y="10" width="1" height="1" fill="#0088ff"/><rect x="1" y="11" width="1" height="1" fill="#0088ff"/><rect x="10" y="11" width="1" height="1" fill="#0088ff"/><rect x="13" y="11" width="1" height="1" fill="#0088ff"/><rect x="1" y="12" width="1" height="1" fill="#0088ff"/><rect x="9" y="12" width="1" height="1" fill="#0088ff"/><rect x="13" y="12" width="1" height="1" fill="#0088ff"/><rect x="1" y="13" width="13" height="1" fill="#0088ff"/></svg>
<div class="t" style="left:22px;top:718px;font-size:11.2px;line-height:12px;color:#1a1a1a;letter-spacing:0.177px;">Metal7</div>
<div class="t" style="left:87.5px;top:718px;font-size:11.2px;line-height:12px;color:#1a1a1a;letter-spacing:0.226px;">drw</div>
<div class="cb2" style="left:120px;top:718px"></div>
<svg class="a" style="left:120px;top:718px" width="12" height="12"><path d="M2 3.8L5 6.8L10.6 1.7V4.7L5 10.3L2 7.3z" fill="#cc0000"/></svg>
<div class="cb2" style="left:142px;top:718px"></div>
<svg class="a" style="left:142px;top:718px" width="12" height="12"><path d="M2 3.8L5 6.8L10.6 1.7V4.7L5 10.3L2 7.3z" fill="#cc0000"/></svg>
<svg class="a" style="left:3px;top:734px" width="15" height="15" shape-rendering="crispEdges"><rect width="15" height="15" fill="#000"/><rect x="1" y="1" width="13" height="13" fill="#e0d000"/></svg>
<div class="t" style="left:21.7px;top:735px;font-size:11.2px;line-height:12px;color:#1a1a1a;letter-spacing:-0.306px;">Via7</div>
<div class="t" style="left:87.5px;top:735px;font-size:11.2px;line-height:12px;color:#1a1a1a;letter-spacing:0.226px;">drw</div>
<div class="cb2" style="left:120px;top:735px"></div>
<svg class="a" style="left:120px;top:735px" width="12" height="12"><path d="M2 3.8L5 6.8L10.6 1.7V4.7L5 10.3L2 7.3z" fill="#cc0000"/></svg>
<div class="cb2" style="left:142px;top:735px"></div>
<svg class="a" style="left:142px;top:735px" width="12" height="12"><path d="M2 3.8L5 6.8L10.6 1.7V4.7L5 10.3L2 7.3z" fill="#cc0000"/></svg>
<svg class="a" style="left:3px;top:751px" width="15" height="15" shape-rendering="crispEdges"><rect width="15" height="15" fill="#000"/><rect x="1" y="1" width="13" height="1" fill="#ff50b0"/><rect x="1" y="2" width="2" height="1" fill="#ff50b0"/><rect x="13" y="2" width="1" height="1" fill="#ff50b0"/><rect x="1" y="3" width="1" height="1" fill="#ff50b0"/><rect x="3" y="3" width="1" height="1" fill="#ff50b0"/><rect x="13" y="3" width="1" height="1" fill="#ff50b0"/><rect x="1" y="4" width="1" height="1" fill="#ff50b0"/><rect x="4" y="4" width="1" height="1" fill="#ff50b0"/><rect x="13" y="4" width="1" height="1" fill="#ff50b0"/><rect x="1" y="5" width="1" height="1" fill="#ff50b0"/><rect x="5" y="5" width="1" height="1" fill="#ff50b0"/><rect x="13" y="5" width="1" height="1" fill="#ff50b0"/><rect x="1" y="6" width="1" height="1" fill="#ff50b0"/><rect x="13" y="6" width="1" height="1" fill="#ff50b0"/><rect x="1" y="7" width="1" height="1" fill="#ff50b0"/><rect x="7" y="7" width="5" height="1" fill="#ff50b0"/><rect x="13" y="7" width="1" height="1" fill="#ff50b0"/><rect x="1" y="8" width="1" height="1" fill="#ff50b0"/><rect x="7" y="8" width="1" height="1" fill="#ff50b0"/><rect x="9" y="8" width="1" height="1" fill="#ff50b0"/><rect x="11" y="8" width="1" height="1" fill="#ff50b0"/><rect x="13" y="8" width="1" height="1" fill="#ff50b0"/><rect x="1" y="9" width="1" height="1" fill="#ff50b0"/><rect x="7" y="9" width="1" height="1" fill="#ff50b0"/><rect x="9" y="9" width="1" height="1" fill="#ff50b0"/><rect x="11" y="9" width="1" height="1" fill="#ff50b0"/><rect x="13" y="9" width="1" height="1" fill="#ff50b0"/><rect x="1" y="10" width="1" height="1" fill="#ff50b0"/><rect x="7" y="10" width="1" height="1" fill="#ff50b0"/><rect x="9" y="10" width="1" height="1" fill="#ff50b0"/><rect x="11" y="10" width="1" height="1" fill="#ff50b0"/><rect x="13" y="10" width="1" height="1" fill="#ff50b0"/><rect x="1" y="11" width="1" height="1" fill="#ff50b0"/><rect x="13" y="11" width="1" height="1" fill="#ff50b0"/><rect x="1" y="12" width="1" height="1" fill="#ff50b0"/><rect x="12" y="12" width="2" height="1" fill="#ff50b0"/><rect x="1" y="13" width="13" height="1" fill="#ff50b0"/></svg>
<div class="t" style="left:22px;top:752px;font-size:11.2px;line-height:12px;color:#1a1a1a;letter-spacing:0.177px;">Metal8</div>
<div class="t" style="left:87.5px;top:752px;font-size:11.2px;line-height:12px;color:#1a1a1a;letter-spacing:0.226px;">drw</div>
<div class="cb2" style="left:120px;top:752px"></div>
<svg class="a" style="left:120px;top:752px" width="12" height="12"><path d="M2 3.8L5 6.8L10.6 1.7V4.7L5 10.3L2 7.3z" fill="#cc0000"/></svg>
<div class="cb2" style="left:142px;top:752px"></div>
<svg class="a" style="left:142px;top:752px" width="12" height="12"><path d="M2 3.8L5 6.8L10.6 1.7V4.7L5 10.3L2 7.3z" fill="#cc0000"/></svg>
<svg class="a" style="left:3px;top:768px" width="15" height="15" shape-rendering="crispEdges"><rect width="15" height="15" fill="#000"/><rect x="1" y="1" width="13" height="13" fill="#ff00ff"/></svg>
<div class="t" style="left:21.7px;top:769px;font-size:11.2px;line-height:12px;color:#1a1a1a;letter-spacing:-0.306px;">Via8</div>
<div class="t" style="left:87.5px;top:769px;font-size:11.2px;line-height:12px;color:#1a1a1a;letter-spacing:0.226px;">drw</div>
<div class="cb2" style="left:120px;top:769px"></div>
<svg class="a" style="left:120px;top:769px" width="12" height="12"><path d="M2 3.8L5 6.8L10.6 1.7V4.7L5 10.3L2 7.3z" fill="#cc0000"/></svg>
<div class="cb2" style="left:142px;top:769px"></div>
<svg class="a" style="left:142px;top:769px" width="12" height="12"><path d="M2 3.8L5 6.8L10.6 1.7V4.7L5 10.3L2 7.3z" fill="#cc0000"/></svg>
<svg class="a" style="left:3px;top:785px" width="15" height="15" shape-rendering="crispEdges"><rect width="15" height="15" fill="#000"/><rect x="1" y="1" width="13" height="1" fill="#8c2c2c"/><rect x="1" y="2" width="1" height="1" fill="#8c2c2c"/><rect x="13" y="2" width="1" height="1" fill="#8c2c2c"/><rect x="1" y="3" width="1" height="1" fill="#8c2c2c"/><rect x="13" y="3" width="1" height="1" fill="#8c2c2c"/><rect x="1" y="4" width="1" height="1" fill="#8c2c2c"/><rect x="13" y="4" width="1" height="1" fill="#8c2c2c"/><rect x="1" y="5" width="1" height="1" fill="#8c2c2c"/><rect x="13" y="5" width="1" height="1" fill="#8c2c2c"/><rect x="1" y="6" width="1" height="1" fill="#8c2c2c"/><rect x="13" y="6" width="1" height="1" fill="#8c2c2c"/><rect x="1" y="7" width="1" height="1" fill="#8c2c2c"/><rect x="7" y="7" width="5" height="1" fill="#8c2c2c"/><rect x="13" y="7" width="1" height="1" fill="#8c2c2c"/><rect x="1" y="8" width="1" height="1" fill="#8c2c2c"/><rect x="7" y="8" width="1" height="1" fill="#8c2c2c"/><rect x="9" y="8" width="1" height="1" fill="#8c2c2c"/><rect x="11" y="8" width="1" height="1" fill="#8c2c2c"/><rect x="13" y="8" width="1" height="1" fill="#8c2c2c"/><rect x="1" y="9" width="1" height="1" fill="#8c2c2c"/><rect x="7" y="9" width="1" height="1" fill="#8c2c2c"/><rect x="9" y="9" width="1" height="1" fill="#8c2c2c"/><rect x="11" y="9" width="1" height="1" fill="#8c2c2c"/><rect x="13" y="9" width="1" height="1" fill="#8c2c2c"/><rect x="1" y="10" width="1" height="1" fill="#8c2c2c"/><rect x="7" y="10" width="1" height="1" fill="#8c2c2c"/><rect x="9" y="10" width="1" height="1" fill="#8c2c2c"/><rect x="11" y="10" width="1" height="1" fill="#8c2c2c"/><rect x="13" y="10" width="1" height="1" fill="#8c2c2c"/><rect x="1" y="11" width="1" height="1" fill="#8c2c2c"/><rect x="13" y="11" width="1" height="1" fill="#8c2c2c"/><rect x="1" y="12" width="1" height="1" fill="#8c2c2c"/><rect x="13" y="12" width="1" height="1" fill="#8c2c2c"/><rect x="1" y="13" width="13" height="1" fill="#8c2c2c"/></svg>
<div class="t" style="left:22px;top:786px;font-size:11.2px;line-height:12px;color:#1a1a1a;letter-spacing:0.177px;">Metal9</div>
<div class="t" style="left:87.5px;top:786px;font-size:11.2px;line-height:12px;color:#1a1a1a;letter-spacing:0.226px;">drw</div>
<div class="cb2" style="left:120px;top:786px"></div>
<svg class="a" style="left:120px;top:786px" width="12" height="12"><path d="M2 3.8L5 6.8L10.6 1.7V4.7L5 10.3L2 7.3z" fill="#cc0000"/></svg>
<div class="cb2" style="left:142px;top:786px"></div>
<svg class="a" style="left:142px;top:786px" width="12" height="12"><path d="M2 3.8L5 6.8L10.6 1.7V4.7L5 10.3L2 7.3z" fill="#cc0000"/></svg>
<svg class="a" style="left:3px;top:802px" width="15" height="15" shape-rendering="crispEdges"><rect width="15" height="15" fill="#000"/><rect x="1" y="1" width="13" height="13" fill="#c84028"/></svg>
<div class="t" style="left:21.7px;top:803px;font-size:11.2px;line-height:12px;color:#1a1a1a;letter-spacing:-0.306px;">Via9</div>
<div class="t" style="left:87.5px;top:803px;font-size:11.2px;line-height:12px;color:#1a1a1a;letter-spacing:0.226px;">drw</div>
<div class="cb2" style="left:120px;top:803px"></div>
<svg class="a" style="left:120px;top:803px" width="12" height="12"><path d="M2 3.8L5 6.8L10.6 1.7V4.7L5 10.3L2 7.3z" fill="#cc0000"/></svg>
<div class="cb2" style="left:142px;top:803px"></div>
<svg class="a" style="left:142px;top:803px" width="12" height="12"><path d="M2 3.8L5 6.8L10.6 1.7V4.7L5 10.3L2 7.3z" fill="#cc0000"/></svg>
<div class="a" style="left:3px;top:819px;width:15px;height:1px;background:#000"></div><div class="a" style="left:4px;top:820px;width:13px;height:1px;background:#0000ff"></div>
<div class="a" style="left:120px;top:820px;width:12px;height:1px;background:#e8e8e8"></div><div class="a" style="left:142px;top:820px;width:12px;height:1px;background:#e8e8e8"></div>
<div class="a" style="left:157px;top:273px;width:16px;height:548px;background:#919191"></div>
<div class="a sbb" style="left:157px;top:273px;width:16px;height:16px"></div>
<svg class="a" style="left:157px;top:273px" width="16" height="16"><path d="M3.5 11.5L8 4.5L12.5 11.5z" fill="#fff" stroke="#a8a8a8" stroke-width="1"/></svg>
<div class="a" style="left:157px;top:288px;width:16px;height:1px;background:#555"></div>
<div class="a" style="left:158px;top:289px;width:14px;height:91px;border-radius:7px;border:1px solid #858585;background:#bdbdbd"></div>
<div class="a" style="left:162px;top:330px;width:6px;height:1px;background:#8a8a8a"></div>
<div class="a" style="left:162px;top:332px;width:6px;height:1px;background:#8a8a8a"></div>
<div class="a" style="left:162px;top:334px;width:6px;height:1px;background:#8a8a8a"></div>
<div class="a" style="left:162px;top:336px;width:6px;height:1px;background:#8a8a8a"></div>
<div class="a" style="left:162px;top:338px;width:6px;height:1px;background:#8a8a8a"></div>
<div class="a sbb" style="left:157px;top:805px;width:16px;height:16px"></div>
<svg class="a" style="left:157px;top:805px" width="16" height="16"><path d="M3.5 4.5L8 11.5L12.5 4.5z" fill="#fff" stroke="#a8a8a8" stroke-width="1"/></svg>
<div class="a" style="left:173px;top:272px;width:2px;height:550px;background:#ffffff"></div>
<div class="a" style="left:0;top:821px;width:175px;height:2px;background:#fbfbfb"></div>
<div class="a" style="left:0;top:823px;width:175px;height:6px;background:#d3d6db"></div>
<div class="hdr" style="top:829px;height:20px"></div>
<div class="t" style="left:13.5px;top:832px;font-size:11.6px;line-height:12px;color:#111;font-weight:bold;letter-spacing:-0.341px;">Objects</div>
<div class="hbtn" style="left:146px;top:831px"></div>
<svg class="a" style="left:146px;top:831px" width="13" height="13" shape-rendering="crispEdges"><g fill="none" stroke="#111"><path d="M5.5 4.5v-2h5v5h-2" stroke-width="1"/><path d="M5 2.5h6" stroke-width="2"/><rect x="2.5" y="5.5" width="6" height="5"/><path d="M2 5.5h7" stroke-width="2"/></g></svg>
<div class="hbtn" style="left:161px;top:831px"></div>
<svg class="a" style="left:161px;top:831px" width="13" height="14"><path d="M2.5 3.6l8 6.8M10.5 3.6l-8 6.8" stroke="#000" stroke-width="1.7" fill="none"/></svg>
<div class="a" style="left:0;top:849px;width:175px;height:73px;background:#fff"></div>
<div class="a" style="left:0;top:849px;width:175px;height:2px;background:#1a1a1a"></div>
<div class="a" style="left:0;top:849px;width:2px;height:72px;background:linear-gradient(90deg,#666,#111)"></div>
<div class="a" style="left:0;top:919px;width:175px;height:3px;background:linear-gradient(#333,#000 50%,#222)"></div>
<div class="a" style="left:2px;top:851px;width:154px;height:17px;overflow:hidden"><div class="th" style="left:0;width:110px"></div><div class="th" style="left:110px;width:22px"></div><div class="th" style="left:132px;width:22px"></div></div>
<div class="t" style="left:36.5px;top:853px;font-size:11.6px;line-height:12px;color:#111;font-weight:bold;letter-spacing:-0.341px;">Objects</div>
<div class="t" style="left:119.5px;top:853px;font-size:11.2px;line-height:12px;color:#1a1a1a;">V</div>
<div class="t" style="left:142.5px;top:853px;font-size:11.2px;line-height:12px;color:#1a1a1a;">S</div>
<div class="t" style="left:24.8px;top:870px;font-size:11.2px;line-height:12px;color:#1a1a1a;letter-spacing:-0.055px;">Instances</div>
<div class="cb2" style="left:120px;top:870px"></div>
<svg class="a" style="left:120px;top:870px" width="12" height="12"><path d="M2 3.8L5 6.8L10.6 1.7V4.7L5 10.3L2 7.3z" fill="#cc0000"/></svg>
<div class="cb2" style="left:142px;top:870px"></div>
<svg class="a" style="left:142px;top:870px" width="12" height="12"><path d="M2 3.8L5 6.8L10.6 1.7V4.7L5 10.3L2 7.3z" fill="#cc0000"/></svg>
<div class="a" style="left:13px;top:876px;width:9px;height:1px;background:repeating-linear-gradient(90deg,#333 0 1px,transparent 1px 2px)"></div>
<div class="t" style="left:24.8px;top:887px;font-size:11.2px;line-height:12px;color:#1a1a1a;letter-spacing:-0.429px;">Pins</div>
<div class="cb2" style="left:120px;top:887px"></div>
<svg class="a" style="left:120px;top:887px" width="12" height="12"><path d="M2 3.8L5 6.8L10.6 1.7V4.7L5 10.3L2 7.3z" fill="#cc0000"/></svg>
<div class="cb2" style="left:142px;top:887px"></div>
<svg class="a" style="left:142px;top:887px" width="12" height="12"><path d="M2 3.8L5 6.8L10.6 1.7V4.7L5 10.3L2 7.3z" fill="#cc0000"/></svg>
<div class="a" style="left:13px;top:893px;width:9px;height:1px;background:repeating-linear-gradient(90deg,#333 0 1px,transparent 1px 2px)"></div>
<div class="t" style="left:24.6px;top:904px;font-size:11.2px;line-height:12px;color:#1a1a1a;letter-spacing:-0.596px;">Vias</div>
<div class="cb2" style="left:120px;top:904px"></div>
<svg class="a" style="left:120px;top:904px" width="12" height="12"><path d="M2 3.8L5 6.8L10.6 1.7V4.7L5 10.3L2 7.3z" fill="#cc0000"/></svg>
<div class="cb2" style="left:142px;top:904px"></div>
<svg class="a" style="left:142px;top:904px" width="12" height="12"><path d="M2 3.8L5 6.8L10.6 1.7V4.7L5 10.3L2 7.3z" fill="#cc0000"/></svg>
<div class="a" style="left:13px;top:910px;width:9px;height:1px;background:repeating-linear-gradient(90deg,#333 0 1px,transparent 1px 2px)"></div>
<div class="a" style="left:12px;top:869px;width:1px;height:50px;background:repeating-linear-gradient(#333 0 1px,transparent 1px 2px)"></div>
<div class="a" style="left:157px;top:851px;width:16px;height:68px;background:#919191"></div>
<div class="a sbb" style="left:157px;top:851px;width:16px;height:16px"></div>
<svg class="a" style="left:157px;top:851px" width="16" height="16"><path d="M3.5 11.5L8 4.5L12.5 11.5z" fill="#fff" stroke="#a8a8a8" stroke-width="1"/></svg>
<div class="a" style="left:157px;top:866px;width:16px;height:1px;background:#555"></div>
<div class="a" style="left:158px;top:867px;width:14px;height:19px;border-radius:7px;border:1px solid #858585;background:#bdbdbd"></div>
<div class="a" style="left:162px;top:872px;width:6px;height:1px;background:#8a8a8a"></div>
<div class="a" style="left:162px;top:874px;width:6px;height:1px;background:#8a8a8a"></div>
<div class="a" style="left:162px;top:876px;width:6px;height:1px;background:#8a8a8a"></div>
<div class="a" style="left:162px;top:878px;width:6px;height:1px;background:#8a8a8a"></div>
<div class="a" style="left:162px;top:880px;width:6px;height:1px;background:#8a8a8a"></div>
<div class="a sbb" style="left:157px;top:903px;width:16px;height:16px"></div>
<svg class="a" style="left:157px;top:903px" width="16" height="16"><path d="M3.5 4.5L8 11.5L12.5 4.5z" fill="#fff" stroke="#a8a8a8" stroke-width="1"/></svg>
<div class="a" style="left:173px;top:851px;width:2px;height:68px;background:#ffffff"></div>
<div class="a" style="left:0;top:922px;width:175px;height:22px;background:#efefef"></div>
<div class="a" style="left:1px;top:922px;width:54px;height:22px;background:#f0f0f0;border:1px solid #cfcfcf;border-top:none"></div>
<div class="a" style="left:55px;top:922px;width:44px;height:21px;background:#d2d2d2;border:1px solid #b4b4b4;border-top:none"></div>
<div class="t" style="left:8.5px;top:926px;font-size:11.2px;line-height:12px;color:#1a1a1a;letter-spacing:-0.078px;">Objects</div>
<div class="t" style="left:63.5px;top:925px;font-size:11.2px;line-height:12px;color:#1a1a1a;letter-spacing:-0.065px;">Grids</div>
<div class="a" style="left:181px;top:129px;width:779px;height:2px;background:#fff"></div>
<div id="cv" class="a" style="left:181px;top:131px;width:779px;height:813px;background:#000"></div>
<svg class="a" style="left:0;top:0" width="960" height="1014" viewBox="0 0 960 1014" shape-rendering="crispEdges"><defs><pattern id="dots" width="4" height="4" patternUnits="userSpaceOnUse"><rect x="3" y="0" width="1" height="1" fill="#0000ff"/><rect x="1" y="2" width="1" height="1" fill="#0000ff"/></pattern></defs><rect x="443.5" y="187.5" width="255" height="64" fill="url(#dots)" stroke="#0000ff" stroke-width="1"/><rect x="443" y="219" width="256" height="1" fill="#0000ff"/><rect x="220.5" y="410.5" width="64" height="255" fill="url(#dots)" stroke="#0000ff" stroke-width="1"/><rect x="252" y="410" width="1" height="256" fill="#0000ff"/><rect x="730.5" y="410.5" width="64" height="319" fill="url(#dots)" stroke="#0000ff" stroke-width="1"/><rect x="762" y="410" width="1" height="320" fill="#0000ff"/><rect x="443.5" y="697.5" width="319" height="64" fill="url(#dots)" stroke="#0000ff" stroke-width="1"/><rect x="443" y="729" width="320" height="1" fill="#0000ff"/><rect x="857.5" y="410.5" width="64" height="446" fill="url(#dots)" stroke="#0000ff" stroke-width="1"/><rect x="889" y="410" width="1" height="447" fill="#0000ff"/><rect x="443.5" y="824.5" width="446" height="64" fill="url(#dots)" stroke="#0000ff" stroke-width="1"/><rect x="443" y="856" width="447" height="1" fill="#0000ff"/><rect x="571" y="131" width="1" height="813" fill="#ffffff"/><rect x="181" y="538" width="779" height="1" fill="#ffffff"/><rect x="443" y="218" width="20" height="3" fill="#ffffff"/><rect x="251" y="410" width="3" height="20" fill="#ffffff"/><rect x="412.5" y="612.5" width="4" height="4" fill="none" stroke="#ffff00" stroke-width="1"/></svg>
<div class="a" style="left:0;top:944px;width:960px;height:70px;background:#f1f1f1"></div>
<div class="a" style="left:0;top:945px;width:960px;height:28px;background:linear-gradient(#ececec,#e4e4e4 25%,#d2d2d2 65%,#c2c2c2);border-bottom:1px solid #9a9a9a;border-radius:4px 4px 5px 5px;width:959px"></div>
<div class="a" style="left:4px;top:950px;width:1px;height:18px;background:#858585"></div>
<div class="a" style="left:6px;top:950px;width:1px;height:18px;background:#858585"></div>
<div class="a" style="left:8px;top:950px;width:1px;height:18px;background:#858585"></div>
<div class="a" style="left:0;top:975px;width:960px;height:17px;background:linear-gradient(#e8e8e8,#dadada 50%,#c6c6c6);border-bottom:1px solid #a0a0a0;border-radius:4px 4px 5px 5px;width:959px"></div>
<div class="a" style="left:4px;top:980px;width:1px;height:6px;background:#8c8c8c"></div>
<div class="a" style="left:6px;top:980px;width:1px;height:6px;background:#8c8c8c"></div>
<div class="a" style="left:8px;top:980px;width:1px;height:6px;background:#8c8c8c"></div>
<div class="t" style="left:9.8px;top:976px;font-size:11.2px;line-height:12px;color:#1a1a1a;letter-spacing:-0.01px;">mouse L:</div>
<div class="t" style="left:474px;top:976px;font-size:11.2px;line-height:12px;color:#1a1a1a;letter-spacing:0.559px;">M:</div>
<div class="t" style="left:942.3px;top:976px;font-size:11.2px;line-height:12px;color:#1a1a1a;letter-spacing:-1.5px;">R:</div>
<div class="a" style="left:1px;top:993px;width:27px;height:21px;background:#fadadd"></div>
<div class="a" style="left:28px;top:993px;width:1px;height:21px;background:#6a6a6a"></div>
<div class="a" style="left:0;top:1013px;width:960px;height:1px;background:#9a9a9a"></div>
<div class="t" style="left:2px;top:997px;font-size:11.2px;line-height:12px;color:#1a1a1a;letter-spacing:-0.139px;">3(4)</div>
<div class="t" style="left:37.5px;top:997px;font-size:11.2px;line-height:12px;color:#1a1a1a;">></div>
<div class="a" style="left:904px;top:995px;width:1px;height:17px;background:#5a5a5a"></div>
<div class="t" style="left:912.5px;top:998px;font-size:11.2px;line-height:12px;color:#1a1a1a;letter-spacing:-0.42px;">Cmd:</div>
<div class="a" style="left:947px;top:995px;width:10px;height:17px;background:#93939a;border:1px solid #4a4a4a;border-left-color:#8a8a8a;border-top-color:#8a8a8a"></div>
</body></html>
